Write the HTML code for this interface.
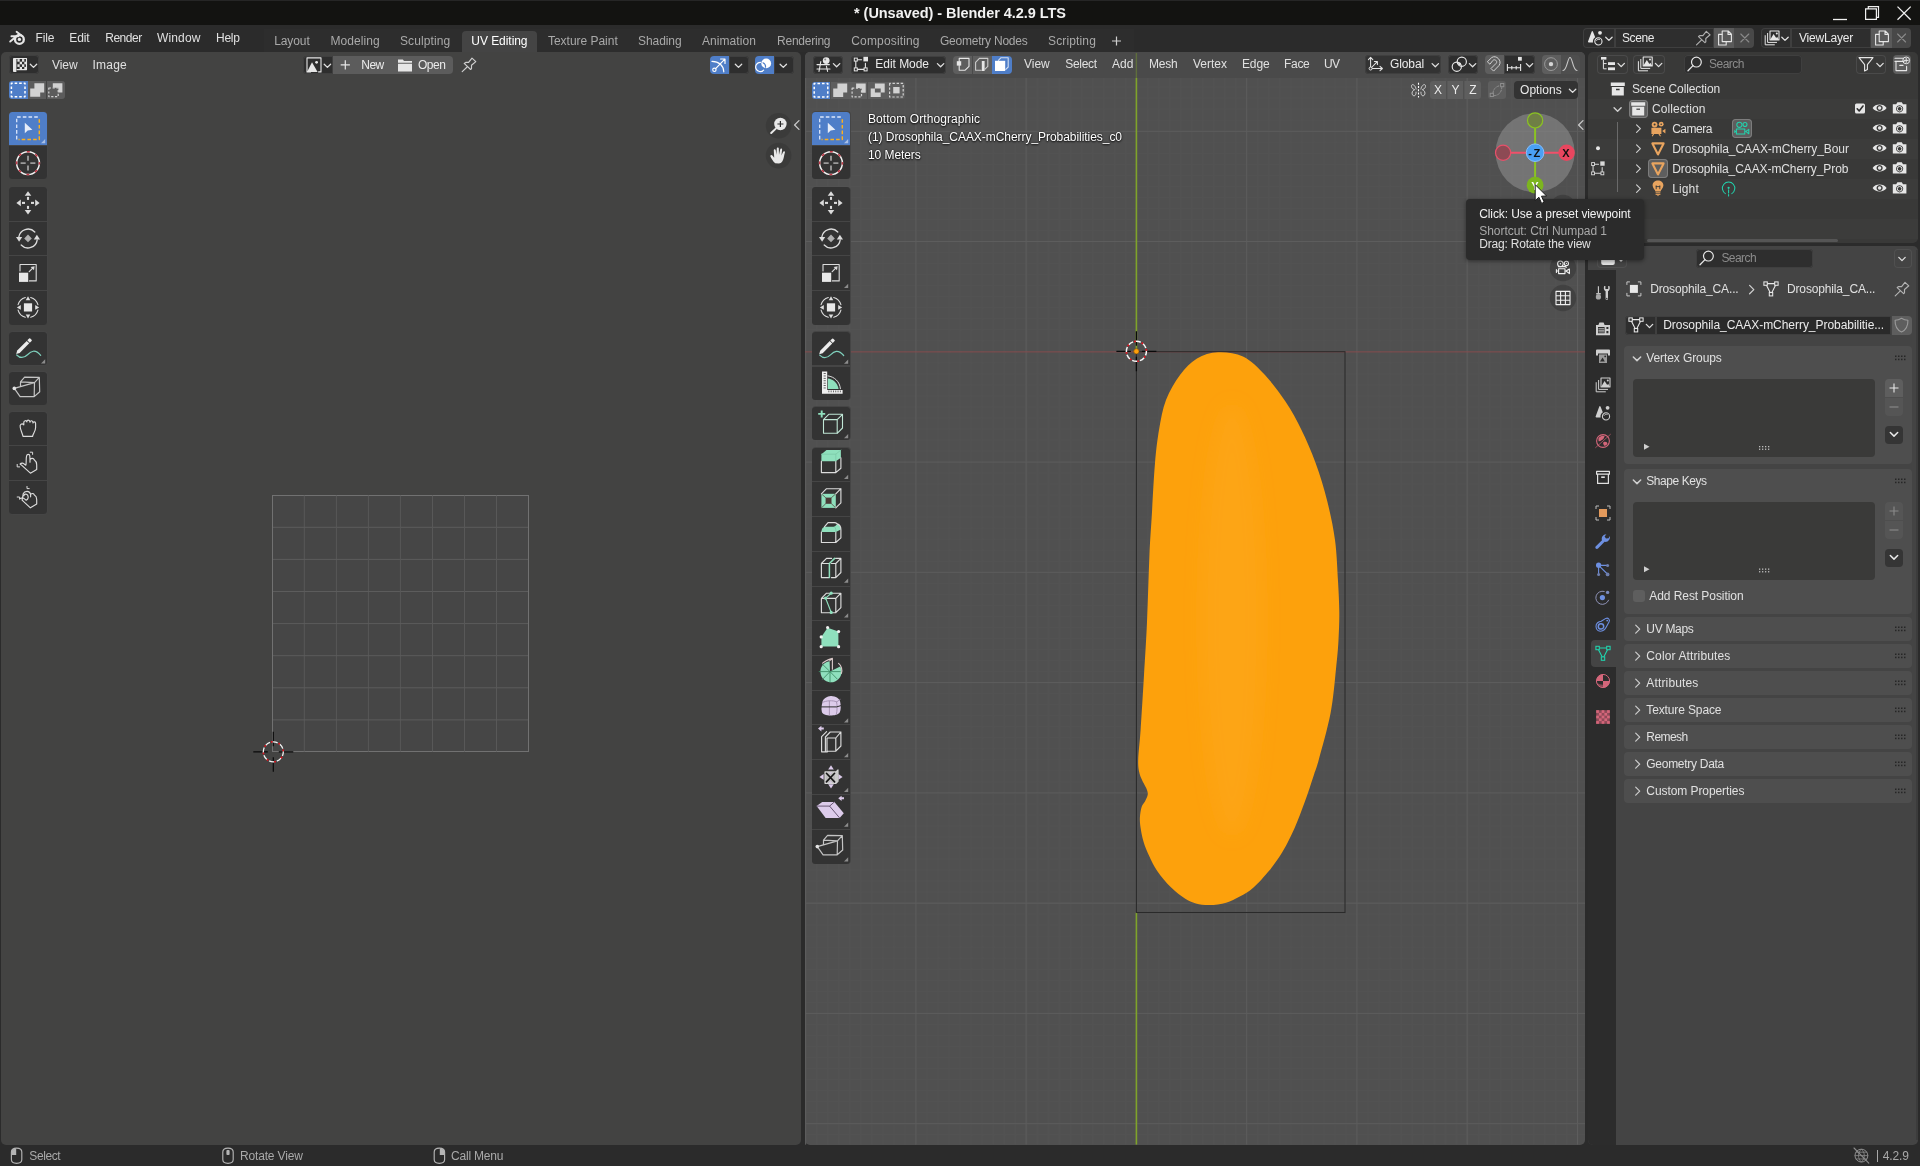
<!DOCTYPE html>
<html><head><meta charset="utf-8"><title>Blender</title>
<style>
html,body{margin:0;padding:0;background:#2b2b2b;}
body{width:1920px;height:1166px;position:relative;overflow:hidden;font-family:"Liberation Sans", sans-serif;font-size:12px;}
div,span.t{position:absolute;box-sizing:border-box;}
span.t{white-space:nowrap;line-height:20px;height:20px;}
.sh{text-shadow:0 1px 2px rgba(0,0,0,.9),0 0 2px rgba(0,0,0,.7);}
svg{position:absolute;left:0;top:0;overflow:visible;}
.L{left:0;top:0;width:1920px;height:1166px;will-change:transform;}
</style></head><body>
<div style="left:0px;top:0px;width:1920px;height:25px;background:#131311;"></div>
<div style="left:0px;top:0px;width:1920px;height:1px;background:#262626;"></div>
<div style="left:0px;top:25px;width:1920px;height:27px;background:#2b2b2b;"></div>
<div style="left:264px;top:29px;width:870px;height:23px;background:#2d2d2d;"></div>
<div style="left:462px;top:31px;width:75px;height:21px;background:#444444;border-radius:4px 4px 0 0;"></div>
<div style="left:1583px;top:28px;width:32px;height:19.5px;background:#2e2e2e;border-radius:4px 0 0 4px;box-shadow:inset 0 0 0 1px #3f3f3f;"></div>
<div style="left:1615px;top:28px;width:99px;height:19.5px;background:#2e2e2e;border-radius:0;box-shadow:inset 0 0 0 1px #3f3f3f;"></div>
<div style="left:1714px;top:28px;width:20px;height:19.5px;background:#5a5a5a;border-radius:0;"></div>
<div style="left:1734px;top:28px;width:20px;height:19.5px;background:#484848;border-radius:0 4px 4px 0;"></div>
<div style="left:1761px;top:28px;width:30px;height:19.5px;background:#2e2e2e;border-radius:4px 0 0 4px;box-shadow:inset 0 0 0 1px #3f3f3f;"></div>
<div style="left:1791px;top:28px;width:80px;height:19.5px;background:#2e2e2e;border-radius:0;box-shadow:inset 0 0 0 1px #3f3f3f;"></div>
<div style="left:1871px;top:28px;width:21px;height:19.5px;background:#5a5a5a;border-radius:0;"></div>
<div style="left:1892px;top:28px;width:19px;height:19.5px;background:#484848;border-radius:0 4px 4px 0;"></div>
<div style="left:1px;top:52px;width:800px;height:1092.7px;background:#434342;border-radius:5px;"></div>
<div style="left:805px;top:52px;width:780px;height:1092.7px;background:#505050;border-radius:5px;overflow:hidden;"></div>
<div style="left:1588px;top:52px;width:330px;height:190.5px;background:#393938;border-radius:5px;"></div>
<div style="left:1588px;top:246px;width:330px;height:898.7px;background:#444444;border-radius:5px;"></div>
<div style="left:1916px;top:250px;width:2px;height:890px;background:#3c3c3c;"></div>
<svg width="1920" height="1166" viewBox="0 0 1920 1166"><defs><clipPath id="vpclip"><rect x="805" y="78" width="780" height="1066.7" rx="0"/></clipPath></defs>
<defs><pattern id="mg" x="1135.90" y="351.30" width="11.027" height="11.027" patternUnits="userSpaceOnUse"><path d="M0.5 0 V11.027 M0 0.5 H11.027" stroke="#525252" stroke-width="1" fill="none"/></pattern></defs>
<g clip-path="url(#vpclip)"><rect x="805" y="78" width="780" height="1066.7" fill="url(#mg)"/><path d="M805.6 78 V1144.7" stroke="#5d5d5d" stroke-width="1"/><path d="M915.9 78 V1144.7" stroke="#5d5d5d" stroke-width="1"/><path d="M1026.1 78 V1144.7" stroke="#5d5d5d" stroke-width="1"/><path d="M1246.7 78 V1144.7" stroke="#5d5d5d" stroke-width="1"/><path d="M1356.9 78 V1144.7" stroke="#5d5d5d" stroke-width="1"/><path d="M1467.2 78 V1144.7" stroke="#5d5d5d" stroke-width="1"/><path d="M1577.5 78 V1144.7" stroke="#5d5d5d" stroke-width="1"/><path d="M805 131.3 H1585" stroke="#5d5d5d" stroke-width="1"/><path d="M805 241.5 H1585" stroke="#5d5d5d" stroke-width="1"/><path d="M805 462.1 H1585" stroke="#5d5d5d" stroke-width="1"/><path d="M805 572.3 H1585" stroke="#5d5d5d" stroke-width="1"/><path d="M805 682.6 H1585" stroke="#5d5d5d" stroke-width="1"/><path d="M805 792.9 H1585" stroke="#5d5d5d" stroke-width="1"/><path d="M805 903.2 H1585" stroke="#5d5d5d" stroke-width="1"/><path d="M805 1013.4 H1585" stroke="#5d5d5d" stroke-width="1"/><path d="M805 1123.7 H1585" stroke="#5d5d5d" stroke-width="1"/><path d="M805 351.9 H1585" stroke="#854c4e" stroke-width="1"/><path d="M1136.4 78 V351 M1136.4 912.6 V1144.7" stroke="#7fa32a" stroke-width="1.6"/></g>
<rect x="1136.4" y="351.7" width="208.6" height="560.8" fill="none" stroke="#2a2a2a" stroke-width="1.05"/>
<path d="M1218.0 352.3 C1225.7 352.0 1235.2 352.7 1243.0 356.5 C1250.8 360.3 1257.9 367.4 1265.0 375.0 C1272.1 382.6 1279.7 392.8 1285.8 402.0 C1291.9 411.2 1296.5 419.8 1301.5 430.0 C1306.5 440.2 1311.3 451.2 1315.6 463.0 C1319.9 474.8 1324.0 488.2 1327.2 501.0 C1330.4 513.8 1333.2 526.7 1335.0 540.0 C1336.8 553.3 1337.3 569.0 1338.0 581.0 C1338.7 593.0 1339.2 602.2 1339.3 612.0 C1339.4 621.8 1339.0 630.5 1338.5 640.0 C1338.0 649.5 1337.3 656.8 1336.0 669.0 C1334.7 681.2 1333.5 697.8 1330.6 713.0 C1327.7 728.2 1321.4 749.9 1318.7 760.0 C1316.0 770.1 1315.8 769.1 1314.3 773.7 C1312.8 778.3 1311.3 782.8 1309.8 787.4 C1308.2 792.0 1306.7 796.6 1305.0 801.2 C1303.3 805.8 1301.7 810.3 1299.9 814.9 C1298.1 819.5 1296.4 824.0 1294.4 828.6 C1292.4 833.2 1290.2 837.7 1287.8 842.3 C1285.4 846.9 1283.0 851.4 1279.9 856.1 C1276.8 860.8 1273.7 865.2 1269.3 870.5 C1264.9 875.8 1258.4 883.2 1253.5 887.6 C1248.6 892.0 1244.4 894.1 1239.8 896.6 C1235.2 899.1 1231.1 901.3 1226.1 902.7 C1221.1 904.1 1214.6 905.0 1209.6 905.1 C1204.6 905.2 1200.0 904.5 1195.9 903.4 C1191.8 902.3 1189.0 901.2 1184.9 898.6 C1180.8 896.0 1175.8 892.2 1171.2 887.6 C1166.6 883.0 1161.1 876.5 1157.4 871.2 C1153.7 866.0 1151.5 860.9 1149.2 856.1 C1146.9 851.3 1145.1 846.9 1143.7 842.3 C1142.3 837.7 1141.3 832.7 1140.7 828.6 C1140.1 824.5 1139.7 821.2 1139.9 817.6 C1140.1 814.0 1140.8 809.4 1141.7 806.7 C1142.6 804.0 1144.1 803.3 1145.1 801.2 C1146.1 799.1 1147.6 796.5 1147.8 794.3 C1148.0 792.1 1146.9 789.9 1146.2 788.1 C1145.5 786.3 1144.8 785.7 1143.7 783.3 C1142.6 780.9 1140.5 777.6 1139.6 773.7 C1138.7 769.8 1138.0 767.3 1138.2 760.0 C1138.4 752.7 1139.6 744.2 1140.6 730.0 C1141.6 715.8 1142.9 693.0 1144.0 675.0 C1145.1 657.0 1146.1 641.8 1147.0 622.0 C1147.9 602.2 1148.6 574.3 1149.4 556.0 C1150.2 537.7 1151.1 527.5 1152.0 512.0 C1152.9 496.5 1153.8 476.7 1155.0 463.0 C1156.2 449.3 1157.2 440.5 1159.0 430.0 C1160.8 419.5 1162.5 409.2 1166.0 400.0 C1169.5 390.8 1174.8 381.9 1180.0 375.0 C1185.2 368.1 1190.7 362.3 1197.0 358.5 C1203.3 354.7 1210.3 352.6 1218.0 352.3 Z" fill="#fda10c"/>
<defs><filter id="bl" x="-50%" y="-20%" width="200%" height="140%"><feGaussianBlur stdDeviation="9"/></filter></defs><ellipse cx="1232" cy="620" rx="30" ry="215" fill="#ffb43c" fill-opacity=".2" filter="url(#bl)"/>
<g transform="translate(1136.4 351.3)"><path d="M-20 0 H-5.5 M5.5 0 H20 M0 -20 V-5.5 M0 5.5 V20" stroke="#0a0a0a" stroke-width="1.3"/><circle r="10" fill="none" stroke="#f8f8f8" stroke-width="1.5" stroke-dasharray="5.2 2.65" stroke-dashoffset="1"/><circle r="10" fill="none" stroke="#e8101c" stroke-width="1.7" stroke-dasharray="1.7 6.15" stroke-dashoffset="2.7"/><circle r="2.6" fill="#fda10c" stroke="#8a5200" stroke-width=".6"/></g></svg>
<div style="left:9px;top:55px;width:30px;height:19px;background:#2e2e2e;border-radius:4px;box-shadow:inset 0 0 0 1px #3f3f3f;"></div>
<div style="left:303px;top:56px;width:30px;height:18px;background:#2e2e2e;border-radius:4px 0 0 4px;box-shadow:inset 0 0 0 1px #3f3f3f;"></div>
<div style="left:333px;top:56px;width:60.5px;height:18px;background:#5c5c5c;border-radius:0;"></div>
<div style="left:394px;top:56px;width:59px;height:18px;background:#5c5c5c;border-radius:0 4px 4px 0;"></div>
<div style="left:9px;top:81px;width:18.5px;height:18px;background:#4f7ec8;border-radius:3px 0 0 3px;"></div>
<div style="left:28px;top:81px;width:18px;height:18px;background:#5c5c5c;border-radius:0;"></div>
<div style="left:46.5px;top:81px;width:18px;height:18px;background:#5c5c5c;border-radius:0 3px 3px 0;"></div>
<div style="left:709.5px;top:56px;width:19px;height:18px;background:#4f7ec8;border-radius:4px 0 0 4px;"></div>
<div style="left:728.5px;top:56px;width:20px;height:18px;background:#2e2e2e;border-radius:0 4px 4px 0;box-shadow:inset 0 0 0 1px #3f3f3f;"></div>
<div style="left:754.5px;top:56px;width:19px;height:18px;background:#4f7ec8;border-radius:4px 0 0 4px;"></div>
<div style="left:773.5px;top:56px;width:20px;height:18px;background:#2e2e2e;border-radius:0 4px 4px 0;box-shadow:inset 0 0 0 1px #3f3f3f;"></div>
<div style="left:8.5px;top:111.0px;width:39px;height:68.4px;background:#454545;border-radius:4px;"></div>
<div style="left:9.3px;top:111.8px;width:37.4px;height:32.949999999999996px;background:#4f7ec8;border-radius:3.5px 3.5px 0 0;"></div>
<div style="left:9.3px;top:145.8px;width:37.4px;height:33.4px;background:#333333;border-radius:0 0 3.5px 3.5px;"></div>
<div style="left:8.5px;top:186.5px;width:39px;height:138.4px;background:#454545;border-radius:4px;"></div>
<div style="left:9.3px;top:187.3px;width:37.4px;height:33.449999999999996px;background:#333333;border-radius:3.5px 3.5px 0 0;"></div>
<div style="left:9.3px;top:221.8px;width:37.4px;height:33.449999999999996px;background:#333333;border-radius:0;"></div>
<div style="left:9.3px;top:256.3px;width:37.4px;height:33.449999999999996px;background:#333333;border-radius:0;"></div>
<div style="left:9.3px;top:290.8px;width:37.4px;height:33.9px;background:#333333;border-radius:0 0 3.5px 3.5px;"></div>
<div style="left:8.5px;top:331.3px;width:39px;height:34.4px;background:#454545;border-radius:4px;"></div>
<div style="left:9.3px;top:332.1px;width:37.4px;height:33.4px;background:#333333;border-radius:3.5px;"></div>
<div style="left:8.5px;top:371.3px;width:39px;height:33.8px;background:#454545;border-radius:4px;"></div>
<div style="left:9.3px;top:372.1px;width:37.4px;height:32.8px;background:#333333;border-radius:3.5px;"></div>
<div style="left:8.5px;top:410.8px;width:39px;height:103.9px;background:#454545;border-radius:4px;"></div>
<div style="left:9.3px;top:411.6px;width:37.4px;height:33.449999999999996px;background:#333333;border-radius:3.5px 3.5px 0 0;"></div>
<div style="left:9.3px;top:446.1px;width:37.4px;height:33.449999999999996px;background:#333333;border-radius:0;"></div>
<div style="left:9.3px;top:480.6px;width:37.4px;height:33.9px;background:#333333;border-radius:0 0 3.5px 3.5px;"></div>
<div style="left:811.5px;top:111.0px;width:39px;height:68.4px;background:#454545;border-radius:4px;"></div>
<div style="left:812.3px;top:111.8px;width:37.4px;height:32.949999999999996px;background:#4f7ec8;border-radius:3.5px 3.5px 0 0;"></div>
<div style="left:812.3px;top:145.8px;width:37.4px;height:33.4px;background:#333333;border-radius:0 0 3.5px 3.5px;"></div>
<div style="left:811.5px;top:186.5px;width:39px;height:138.4px;background:#454545;border-radius:4px;"></div>
<div style="left:812.3px;top:187.3px;width:37.4px;height:33.449999999999996px;background:#333333;border-radius:3.5px 3.5px 0 0;"></div>
<div style="left:812.3px;top:221.8px;width:37.4px;height:33.449999999999996px;background:#333333;border-radius:0;"></div>
<div style="left:812.3px;top:256.3px;width:37.4px;height:33.449999999999996px;background:#333333;border-radius:0;"></div>
<div style="left:812.3px;top:290.8px;width:37.4px;height:33.9px;background:#333333;border-radius:0 0 3.5px 3.5px;"></div>
<div style="left:811.5px;top:331.3px;width:39px;height:69.2px;background:#454545;border-radius:4px;"></div>
<div style="left:812.3px;top:332.1px;width:37.4px;height:33.349999999999994px;background:#333333;border-radius:3.5px 3.5px 0 0;"></div>
<div style="left:812.3px;top:366.5px;width:37.4px;height:33.8px;background:#333333;border-radius:0 0 3.5px 3.5px;"></div>
<div style="left:811.5px;top:406.3px;width:39px;height:33.8px;background:#454545;border-radius:4px;"></div>
<div style="left:812.3px;top:407.1px;width:37.4px;height:32.8px;background:#333333;border-radius:3.5px;"></div>
<div style="left:811.5px;top:446.9px;width:39px;height:417.03999999999996px;background:#454545;border-radius:4px;"></div>
<div style="left:812.3px;top:447.7px;width:37.4px;height:33.669999999999995px;background:#333333;border-radius:3.5px 3.5px 0 0;"></div>
<div style="left:812.3px;top:482.42px;width:37.4px;height:33.669999999999995px;background:#333333;border-radius:0;"></div>
<div style="left:812.3px;top:517.1399999999999px;width:37.4px;height:33.669999999999995px;background:#333333;border-radius:0;"></div>
<div style="left:812.3px;top:551.8599999999999px;width:37.4px;height:33.669999999999995px;background:#333333;border-radius:0;"></div>
<div style="left:812.3px;top:586.5799999999999px;width:37.4px;height:33.669999999999995px;background:#333333;border-radius:0;"></div>
<div style="left:812.3px;top:621.3px;width:37.4px;height:33.669999999999995px;background:#333333;border-radius:0;"></div>
<div style="left:812.3px;top:656.02px;width:37.4px;height:33.669999999999995px;background:#333333;border-radius:0;"></div>
<div style="left:812.3px;top:690.7399999999999px;width:37.4px;height:33.669999999999995px;background:#333333;border-radius:0;"></div>
<div style="left:812.3px;top:725.4599999999999px;width:37.4px;height:33.669999999999995px;background:#333333;border-radius:0;"></div>
<div style="left:812.3px;top:760.18px;width:37.4px;height:33.669999999999995px;background:#333333;border-radius:0;"></div>
<div style="left:812.3px;top:794.8999999999999px;width:37.4px;height:33.669999999999995px;background:#333333;border-radius:0;"></div>
<div style="left:812.3px;top:829.6199999999999px;width:37.4px;height:34.12px;background:#333333;border-radius:0 0 3.5px 3.5px;"></div>
<div style="left:272px;top:494.7px;width:256.8px;height:257.3px;background:#464646;box-shadow:inset 0 0 0 1px #717171;"></div>
<div style="left:805px;top:52px;width:780px;height:26px;background:#4a4a4a;border-radius:5px 5px 0 0;"></div>
<div style="left:813px;top:55.5px;width:30px;height:18px;background:#2e2e2e;border-radius:4px;box-shadow:inset 0 0 0 1px #3f3f3f;"></div>
<div style="left:851px;top:55.5px;width:95px;height:18px;background:#2e2e2e;border-radius:4px;box-shadow:inset 0 0 0 1px #3f3f3f;"></div>
<div style="left:953px;top:55.5px;width:19px;height:18px;background:#5e5e5e;border-radius:4px 0 0 4px;"></div>
<div style="left:972.5px;top:55.5px;width:19px;height:18px;background:#5e5e5e;border-radius:0;"></div>
<div style="left:992px;top:55.5px;width:19.5px;height:18px;background:#4f7ec8;border-radius:0 4px 4px 0;"></div>
<div style="left:1365px;top:55px;width:76px;height:18.5px;background:#333333;border-radius:4px;box-shadow:inset 0 0 0 1px #3f3f3f;"></div>
<div style="left:1448px;top:55px;width:30px;height:18.5px;background:#2e2e2e;border-radius:4px;box-shadow:inset 0 0 0 1px #3f3f3f;"></div>
<div style="left:1485px;top:55px;width:19px;height:18.5px;background:#5e5e5e;border-radius:4px 0 0 4px;"></div>
<div style="left:1504px;top:55px;width:31px;height:18.5px;background:#2e2e2e;border-radius:0 4px 4px 0;box-shadow:inset 0 0 0 1px #3f3f3f;"></div>
<div style="left:1542px;top:55px;width:18.5px;height:18.5px;background:#5e5e5e;border-radius:4px 0 0 4px;"></div>
<div style="left:1560.5px;top:55px;width:19.5px;height:18.5px;background:#4e4e4e;border-radius:0 4px 4px 0;"></div>
<div style="left:812px;top:81.5px;width:18px;height:17.5px;background:#4f7ec8;border-radius:3px 0 0 3px;"></div>
<div style="left:830.6px;top:81.5px;width:18.2px;height:17.5px;background:#5e5e5e;border-radius:0;"></div>
<div style="left:849.2px;top:81.5px;width:18.2px;height:17.5px;background:#5e5e5e;border-radius:0;"></div>
<div style="left:867.8px;top:81.5px;width:18.2px;height:17.5px;background:#5e5e5e;border-radius:0;"></div>
<div style="left:886.4px;top:81.5px;width:18.2px;height:17.5px;background:#5e5e5e;border-radius:0 3px 3px 0;"></div>
<div style="left:1430px;top:81px;width:16.6px;height:18px;background:#5e5e5e;border-radius:3px 0 0 3px;"></div>
<div style="left:1447px;top:81px;width:16.6px;height:18px;background:#5e5e5e;border-radius:0;"></div>
<div style="left:1464px;top:81px;width:17px;height:18px;background:#5e5e5e;border-radius:0 3px 3px 0;"></div>
<div style="left:1488px;top:81px;width:18px;height:18px;background:#5e5e5e;border-radius:3px;"></div>
<div style="left:1513.5px;top:81px;width:64.5px;height:18px;background:#333333;border-radius:4px;"></div>
<div style="left:1597px;top:55px;width:30.5px;height:18.5px;background:#393938;border-radius:4px;box-shadow:inset 0 0 0 1px #4a4a4a;"></div>
<div style="left:1633px;top:55px;width:32px;height:18.5px;background:#393938;border-radius:4px;box-shadow:inset 0 0 0 1px #4a4a4a;"></div>
<div style="left:1684px;top:55px;width:118px;height:18.5px;background:#2e2e2e;border-radius:4px;box-shadow:inset 0 0 0 1px #3f3f3f;"></div>
<div style="left:1856px;top:55px;width:30px;height:18.5px;background:#393938;border-radius:4px;box-shadow:inset 0 0 0 1px #4a4a4a;"></div>
<div style="left:1892.5px;top:55px;width:18.5px;height:18.5px;background:#5e5e5e;border-radius:4px;"></div>
<div style="left:1588px;top:99px;width:330px;height:20px;background:#3c3c3b;"></div>
<div style="left:1588px;top:139px;width:330px;height:20px;background:#3c3c3b;"></div>
<div style="left:1588px;top:179px;width:330px;height:20px;background:#3c3c3b;"></div>
<div style="left:1588px;top:219px;width:330px;height:20px;background:#3c3c3b;"></div>
<div style="left:1647px;top:238.5px;width:191px;height:3.5px;background:#555555;border-radius:2px;"></div>
<div style="left:1696px;top:249px;width:117px;height:18.5px;background:#2e2e2e;border-radius:4px;box-shadow:inset 0 0 0 1px #3f3f3f;"></div>
<div style="left:1893.5px;top:249px;width:18px;height:18.5px;background:#444444;border-radius:4px;box-shadow:inset 0 0 0 1px #505050;"></div>
<div style="left:1588px;top:270px;width:28px;height:874.7px;background:#2c2c2c;border-radius:0 0 0 5px;"></div>
<div style="left:1590.5px;top:639.5px;width:25.5px;height:27px;background:#444444;border-radius:4px 0 0 4px;"></div>
<div style="left:1625px;top:316px;width:30.5px;height:18.5px;background:#2e2e2e;border-radius:4px 0 0 4px;box-shadow:inset 0 0 0 1px #3f3f3f;"></div>
<div style="left:1656px;top:316px;width:235px;height:18.5px;background:#2a2a2a;border-radius:0;box-shadow:inset 0 0 0 1px #3f3f3f;"></div>
<div style="left:1891.5px;top:316px;width:20px;height:18.5px;background:#5e5e5e;border-radius:0 4px 4px 0;"></div>
<div style="left:1624px;top:345.5px;width:288px;height:118px;background:#4e4e4e;border-radius:4px;"></div>
<div style="left:1624px;top:468.5px;width:288px;height:145px;background:#4e4e4e;border-radius:4px;"></div>
<div style="left:1624px;top:616.5px;width:288px;height:24.5px;background:#4e4e4e;border-radius:4px;"></div>
<div style="left:1624px;top:643.5px;width:288px;height:24.5px;background:#4e4e4e;border-radius:4px;"></div>
<div style="left:1624px;top:670.5px;width:288px;height:24.5px;background:#4e4e4e;border-radius:4px;"></div>
<div style="left:1624px;top:697.5px;width:288px;height:24.5px;background:#4e4e4e;border-radius:4px;"></div>
<div style="left:1624px;top:724.5px;width:288px;height:24.5px;background:#4e4e4e;border-radius:4px;"></div>
<div style="left:1624px;top:751.5px;width:288px;height:24.5px;background:#4e4e4e;border-radius:4px;"></div>
<div style="left:1624px;top:778.5px;width:288px;height:24.5px;background:#4e4e4e;border-radius:4px;"></div>
<div style="left:1633px;top:379px;width:242px;height:78px;background:#3a3a39;border-radius:4px;"></div>
<div style="left:1885px;top:379px;width:18px;height:18px;background:#5e5e5e;border-radius:4px 4px 0 0;"></div>
<div style="left:1885px;top:398px;width:18px;height:18px;background:#555555;border-radius:0 0 4px 4px;"></div>
<div style="left:1885px;top:425.5px;width:18px;height:18px;background:#353535;border-radius:4px;"></div>
<div style="left:1633px;top:502px;width:242px;height:77.5px;background:#3a3a39;border-radius:4px;"></div>
<div style="left:1885px;top:502px;width:18px;height:18px;background:#555555;border-radius:4px 4px 0 0;"></div>
<div style="left:1885px;top:521px;width:18px;height:18px;background:#555555;border-radius:0 0 4px 4px;"></div>
<div style="left:1885px;top:548.5px;width:18px;height:18px;background:#353535;border-radius:4px;"></div>
<div style="left:1633px;top:590px;width:12px;height:12px;background:#5e5e5e;border-radius:3px;"></div>
<div style="left:1628.6px;top:99.6px;width:19px;height:18.6px;background:#5e5e5e;border-radius:4px;box-shadow:inset 0 0 0 1px #7d7d7d;"></div>
<div style="left:1648.4px;top:159.4px;width:19.4px;height:18.6px;background:#5e5e5e;border-radius:4px;box-shadow:inset 0 0 0 1px #7d7d7d;"></div>
<div style="left:1732px;top:118.8px;width:20px;height:18.8px;background:#5e5e5e;border-radius:4px;box-shadow:inset 0 0 0 1px #7d7d7d;"></div>
<div style="left:1597px;top:249px;width:30px;height:18.5px;background:#444444;border-radius:4px;box-shadow:inset 0 0 0 1px #505050;"></div>
<svg width="1920" height="1166" viewBox="0 0 1920 1166">
<path d="M1833 19.5 H1847" stroke="#f0f0f0" stroke-width="1.3" fill="none"/>
<path d="M1865.6 8.9 h10.8 v10.4 h-10.8 z M1868.3 8.9 v-2.2 h10.2 v10.6 h-2.1" stroke="#f0f0f0" stroke-width="1.2" fill="none"/>
<path d="M1897.5 6.6 L1910.7 19.8 M1910.7 6.6 L1897.5 19.8" stroke="#f0f0f0" stroke-width="1.3" fill="none"/>
<path d="M1116.5 36.5 v9 M1112 41 h9" stroke="#cfcfcf" stroke-width="1.2" fill="none"/>
<path d="M1877.5 1150 v12" stroke="#a9a9a9" stroke-width="1"/>
<g transform="translate(28 128.2)" ><path d="M-11.3 11.2 V-11.2 H11.3" fill="none" stroke="#dbe6fb" stroke-width="1.3" stroke-linejoin="round"  stroke-dasharray="3.6 2.1" stroke-linecap="butt"/><path d="M11.3 -9 V11.2 H-9.5" fill="none" stroke="#fbb01e" stroke-width="1.45" stroke-linejoin="round"  stroke-dasharray="3.6 2.1" stroke-linecap="butt"/><path d="M-3.2 -5.4 L-3.2 5 L-0.3 2.4 L4.4 1.6 Z" fill="#e6ecf8" /><path d="M17.2 15 L17.2 10.8 L13 15 Z" fill="#a9bfe6" /></g>
<g transform="translate(28 163.1)" ><circle r="11.4" fill="none" stroke="#f2f2f2" stroke-width="1.5"/><circle r="11.4" fill="none" stroke="#c23a48" stroke-width="1.5" stroke-dasharray="3 5.95" stroke-dashoffset="1.5"/><path d="M-7.4 0 H-2.3 M2.3 0 H7.4 M0 -7.4 V-2.3 M0 2.3 V7.4" fill="none" stroke="#9a9a9a" stroke-width="1.9" stroke-linejoin="round"  stroke-linecap="butt"/></g>
<g transform="translate(28 202.9)" ><g transform="rotate(0)"><path d="M0 -11.6 L3.3 -7.2 L-3.3 -7.2 Z" fill="#dcdcdc" /><path d="M0 -6 V-3" fill="none" stroke="#dcdcdc" stroke-width="2.1" stroke-linejoin="round"  stroke-linecap="butt"/></g><g transform="rotate(90)"><path d="M0 -11.6 L3.3 -7.2 L-3.3 -7.2 Z" fill="#dcdcdc" /><path d="M0 -6 V-3" fill="none" stroke="#dcdcdc" stroke-width="2.1" stroke-linejoin="round"  stroke-linecap="butt"/></g><g transform="rotate(180)"><path d="M0 -11.6 L3.3 -7.2 L-3.3 -7.2 Z" fill="#dcdcdc" /><path d="M0 -6 V-3" fill="none" stroke="#dcdcdc" stroke-width="2.1" stroke-linejoin="round"  stroke-linecap="butt"/></g><g transform="rotate(270)"><path d="M0 -11.6 L3.3 -7.2 L-3.3 -7.2 Z" fill="#dcdcdc" /><path d="M0 -6 V-3" fill="none" stroke="#dcdcdc" stroke-width="2.1" stroke-linejoin="round"  stroke-linecap="butt"/></g></g>
<g transform="translate(28 238.4)" ><path d="M-9.2 -1.2 A9.3 9.3 0 0 1 6.8 -6.4" fill="none" stroke="#dcdcdc" stroke-width="1.3" stroke-linejoin="round" stroke-linecap="round" /><path d="M9.2 1.4 A9.3 9.3 0 0 1 -6.8 6.6" fill="none" stroke="#dcdcdc" stroke-width="1.3" stroke-linejoin="round" stroke-linecap="round" /><path d="M-12 -1.4 L-5.8 -1.4 L-8.9 3.4 Z" fill="#dcdcdc" /><path d="M12 1.2 L5.8 1.2 L8.9 -3.7 Z" fill="#dcdcdc" /><path d="M0 -3.8 L3.8 0 L0 3.8 L-3.8 0 Z" fill="#b0b0b0" /></g>
<g transform="translate(28 272.9)" ><path d="M-8 -2 V-8.4 H8.2 V8 H1.4" fill="none" stroke="#dcdcdc" stroke-width="1.1" stroke-linejoin="round" stroke-linecap="round" /><path d="M-9 -0.2 H0.2 V9 H-9 Z" fill="#e8e8e8" /><path d="M1.2 -1.2 L5.2 -5.2" fill="none" stroke="#dcdcdc" stroke-width="1.2" stroke-linejoin="round" stroke-linecap="round" /><path d="M6.6 -6.6 L6 -2.6 L2.6 -6 Z" fill="#dcdcdc" /></g>
<g transform="translate(28 307.4)" ><path d="M-4.1 -4.1 H4.1 V4.1 H-4.1 Z" fill="#e8e8e8" /><g transform="rotate(0)"><path d="M2.7 -9.9 A10.3 10.3 0 0 1 9.9 -2.7" fill="none" stroke="#dcdcdc" stroke-width="1.1" stroke-linejoin="round" stroke-linecap="round" /><path d="M0 -11.2 L2.3 -7.2 L-2.3 -7.2 Z" fill="#dcdcdc" /></g><g transform="rotate(90)"><path d="M2.7 -9.9 A10.3 10.3 0 0 1 9.9 -2.7" fill="none" stroke="#dcdcdc" stroke-width="1.1" stroke-linejoin="round" stroke-linecap="round" /><path d="M0 -11.2 L2.3 -7.2 L-2.3 -7.2 Z" fill="#dcdcdc" /></g><g transform="rotate(180)"><path d="M2.7 -9.9 A10.3 10.3 0 0 1 9.9 -2.7" fill="none" stroke="#dcdcdc" stroke-width="1.1" stroke-linejoin="round" stroke-linecap="round" /><path d="M0 -11.2 L2.3 -7.2 L-2.3 -7.2 Z" fill="#dcdcdc" /></g><g transform="rotate(270)"><path d="M2.7 -9.9 A10.3 10.3 0 0 1 9.9 -2.7" fill="none" stroke="#dcdcdc" stroke-width="1.1" stroke-linejoin="round" stroke-linecap="round" /><path d="M0 -11.2 L2.3 -7.2 L-2.3 -7.2 Z" fill="#dcdcdc" /></g></g>
<g transform="translate(28 348.5)" ><path d="M-11.3 6.5 C-8 9.8 -4.5 10 -0.5 6.2 C3 2.8 7 0.2 12.7 6.8" fill="none" stroke="#7fd1bd" stroke-width="1.2" stroke-linejoin="round" stroke-linecap="round" /><g transform="translate(-11.8 5.6) rotate(-45.5)"><path d="M0 0 L3.2 -1.75 L16.8 -1.75 L16.8 1.75 L3.2 1.75 Z" fill="#ececec" /><path d="M17.6 -1.75 H20.2 Q21 -1.75 21 -0.9 V0.9 Q21 1.75 20.2 1.75 H17.6 Z" fill="#ececec" /></g><path d="M17.2 15 L17.2 10.8 L13 15 Z" fill="#8c8c8c" /></g>
<g transform="translate(28 388.2)" ><path d="M-7.5 -6.3 L-3.4 -11.1 L11.3 -10.8 L6.5 -5.6 Z M11.3 -10.8 L11.7 3.6 L6.2 8.4 L6.5 -5.6 M6.2 8.4 H-7.9 L-13.7 0.2 L6.5 -5.6 M-7.5 -6.3 V-2" fill="none" stroke="#c4c4c4" stroke-width="1.2" stroke-linejoin="round" stroke-linecap="round" /><circle cx="-13.7" cy="0.2" r="1.8" fill="#e4e4e4"/></g>
<g transform="translate(28 428.2)" ><path d="M-5 8.2 H4.6 C5 5 7.6 3.4 7.6 -0.6 V-4.8 C7.6 -6.8 5.2 -6.8 5 -5.2 C5 -8 2.2 -8 2 -6 C1.8 -8.8 -1.2 -8.6 -1.2 -6.2 C-1.6 -8.2 -4.2 -7.8 -4.2 -5.6 V-3.4 C-6.2 -5.4 -8.4 -3.6 -7.8 -1.2 C-7.4 2.4 -5.6 5.2 -5 8.2 Z" fill="none" stroke="#dcdcdc" stroke-width="1.15" stroke-linejoin="round" stroke-linecap="round" /></g>
<g transform="translate(28 462.8)" ><path d="M-7.9 1.2 C-6.5 -0.2 -4.5 0.2 -3.5 1.5 L-2.2 2.4 C-1.4 0 -2.2 -4 -1.4 -7 C-1 -8.8 1.6 -8.8 1.8 -7 L2 -3.2 C3.5 -5 5.6 -4.6 6.2 -3 C7.6 -2 8.7 0 8.7 2 V6.6 L2.4 10.4 L-5.9 2.8 Z M2 -3.2 V-0.6" fill="none" stroke="#dcdcdc" stroke-width="1.15" stroke-linejoin="round" stroke-linecap="round" /><path d="M2.2 -10.6 H4.6 V-8.4 M-10.8 1.6 V4.1 H-8.4" fill="none" stroke="#dcdcdc" stroke-width="1" stroke-linejoin="round" stroke-linecap="round" /></g>
<g transform="translate(28 497.2)" ><path d="M-7.9 1.4 C-6.5 0.2 -4.5 0.4 -3.5 1.7 L-1.8 3 C-0.2 2 0.6 0 -0.2 -1.8 C-1.2 -3.6 -3.6 -3.4 -4.2 -1.4 M-4.8 -3.4 C-3.4 -6.6 1.8 -6.8 2.6 -2.8 C4.4 -4.4 6 -3.6 6.4 -2.2 C7.8 -1.4 8.7 0.4 8.7 2.2 V6.8 L2.4 10.6 L-5.9 3 Z M2.6 -2.8 V-0.4" fill="none" stroke="#dcdcdc" stroke-width="1.15" stroke-linejoin="round" stroke-linecap="round" /><path d="M-1 -10.8 V-8.6 H1.2 M-10.8 -0.2 H-8.4 V2" fill="none" stroke="#dcdcdc" stroke-width="1" stroke-linejoin="round" stroke-linecap="round" /></g>
<g transform="translate(831 128.2)" ><path d="M-11.3 11.2 V-11.2 H11.3" fill="none" stroke="#dbe6fb" stroke-width="1.3" stroke-linejoin="round"  stroke-dasharray="3.6 2.1" stroke-linecap="butt"/><path d="M11.3 -9 V11.2 H-9.5" fill="none" stroke="#fbb01e" stroke-width="1.45" stroke-linejoin="round"  stroke-dasharray="3.6 2.1" stroke-linecap="butt"/><path d="M-3.2 -5.4 L-3.2 5 L-0.3 2.4 L4.4 1.6 Z" fill="#e6ecf8" /><path d="M17.2 15 L17.2 10.8 L13 15 Z" fill="#a9bfe6" /></g>
<g transform="translate(831 163.1)" ><circle r="11.4" fill="none" stroke="#f2f2f2" stroke-width="1.5"/><circle r="11.4" fill="none" stroke="#c23a48" stroke-width="1.5" stroke-dasharray="3 5.95" stroke-dashoffset="1.5"/><path d="M-7.4 0 H-2.3 M2.3 0 H7.4 M0 -7.4 V-2.3 M0 2.3 V7.4" fill="none" stroke="#9a9a9a" stroke-width="1.9" stroke-linejoin="round"  stroke-linecap="butt"/></g>
<g transform="translate(831 202.9)" ><g transform="rotate(0)"><path d="M0 -11.6 L3.3 -7.2 L-3.3 -7.2 Z" fill="#dcdcdc" /><path d="M0 -6 V-3" fill="none" stroke="#dcdcdc" stroke-width="2.1" stroke-linejoin="round"  stroke-linecap="butt"/></g><g transform="rotate(90)"><path d="M0 -11.6 L3.3 -7.2 L-3.3 -7.2 Z" fill="#dcdcdc" /><path d="M0 -6 V-3" fill="none" stroke="#dcdcdc" stroke-width="2.1" stroke-linejoin="round"  stroke-linecap="butt"/></g><g transform="rotate(180)"><path d="M0 -11.6 L3.3 -7.2 L-3.3 -7.2 Z" fill="#dcdcdc" /><path d="M0 -6 V-3" fill="none" stroke="#dcdcdc" stroke-width="2.1" stroke-linejoin="round"  stroke-linecap="butt"/></g><g transform="rotate(270)"><path d="M0 -11.6 L3.3 -7.2 L-3.3 -7.2 Z" fill="#dcdcdc" /><path d="M0 -6 V-3" fill="none" stroke="#dcdcdc" stroke-width="2.1" stroke-linejoin="round"  stroke-linecap="butt"/></g></g>
<g transform="translate(831 238.4)" ><path d="M-9.2 -1.2 A9.3 9.3 0 0 1 6.8 -6.4" fill="none" stroke="#dcdcdc" stroke-width="1.3" stroke-linejoin="round" stroke-linecap="round" /><path d="M9.2 1.4 A9.3 9.3 0 0 1 -6.8 6.6" fill="none" stroke="#dcdcdc" stroke-width="1.3" stroke-linejoin="round" stroke-linecap="round" /><path d="M-12 -1.4 L-5.8 -1.4 L-8.9 3.4 Z" fill="#dcdcdc" /><path d="M12 1.2 L5.8 1.2 L8.9 -3.7 Z" fill="#dcdcdc" /><path d="M0 -3.8 L3.8 0 L0 3.8 L-3.8 0 Z" fill="#b0b0b0" /></g>
<g transform="translate(831 272.9)" ><path d="M-8 -2 V-8.4 H8.2 V8 H1.4" fill="none" stroke="#dcdcdc" stroke-width="1.1" stroke-linejoin="round" stroke-linecap="round" /><path d="M-9 -0.2 H0.2 V9 H-9 Z" fill="#e8e8e8" /><path d="M1.2 -1.2 L5.2 -5.2" fill="none" stroke="#dcdcdc" stroke-width="1.2" stroke-linejoin="round" stroke-linecap="round" /><path d="M6.6 -6.6 L6 -2.6 L2.6 -6 Z" fill="#dcdcdc" /><path d="M17.2 15 L17.2 10.8 L13 15 Z" fill="#8c8c8c" /></g>
<g transform="translate(831 307.4)" ><path d="M-4.1 -4.1 H4.1 V4.1 H-4.1 Z" fill="#e8e8e8" /><g transform="rotate(0)"><path d="M2.7 -9.9 A10.3 10.3 0 0 1 9.9 -2.7" fill="none" stroke="#dcdcdc" stroke-width="1.1" stroke-linejoin="round" stroke-linecap="round" /><path d="M0 -11.2 L2.3 -7.2 L-2.3 -7.2 Z" fill="#dcdcdc" /></g><g transform="rotate(90)"><path d="M2.7 -9.9 A10.3 10.3 0 0 1 9.9 -2.7" fill="none" stroke="#dcdcdc" stroke-width="1.1" stroke-linejoin="round" stroke-linecap="round" /><path d="M0 -11.2 L2.3 -7.2 L-2.3 -7.2 Z" fill="#dcdcdc" /></g><g transform="rotate(180)"><path d="M2.7 -9.9 A10.3 10.3 0 0 1 9.9 -2.7" fill="none" stroke="#dcdcdc" stroke-width="1.1" stroke-linejoin="round" stroke-linecap="round" /><path d="M0 -11.2 L2.3 -7.2 L-2.3 -7.2 Z" fill="#dcdcdc" /></g><g transform="rotate(270)"><path d="M2.7 -9.9 A10.3 10.3 0 0 1 9.9 -2.7" fill="none" stroke="#dcdcdc" stroke-width="1.1" stroke-linejoin="round" stroke-linecap="round" /><path d="M0 -11.2 L2.3 -7.2 L-2.3 -7.2 Z" fill="#dcdcdc" /></g></g>
<g transform="translate(831 348.7)" ><path d="M-11.3 6.5 C-8 9.8 -4.5 10 -0.5 6.2 C3 2.8 7 0.2 12.7 6.8" fill="none" stroke="#7fd1bd" stroke-width="1.2" stroke-linejoin="round" stroke-linecap="round" /><g transform="translate(-11.8 5.6) rotate(-45.5)"><path d="M0 0 L3.2 -1.75 L16.8 -1.75 L16.8 1.75 L3.2 1.75 Z" fill="#ececec" /><path d="M17.6 -1.75 H20.2 Q21 -1.75 21 -0.9 V0.9 Q21 1.75 20.2 1.75 H17.6 Z" fill="#ececec" /></g><path d="M17.2 15 L17.2 10.8 L13 15 Z" fill="#8c8c8c" /></g>
<g transform="translate(831 383.1)" ><path d="M-3.2 5.9 V-4.6 C1.6 -4.2 6.6 -0.4 7.6 5.9 Z" fill="#8fe0bd" /><path d="M-3 -7.2 C3.4 -6.4 8.8 -1.6 9.4 5.6" fill="none" stroke="#dcdcdc" stroke-width="1" stroke-linejoin="round" stroke-linecap="round" /><path d="M-9 -11.6 H-3.8 V7 H11.6 V10.6 H-9 Z" fill="#efefef" /><rect x="-7.4" y="-10.0" width="2.2" height="0.9" fill="#5a5a5a"/><rect x="-7.4" y="-7.6" width="2.2" height="0.9" fill="#5a5a5a"/><rect x="-7.4" y="-5.2" width="2.2" height="0.9" fill="#5a5a5a"/><rect x="-7.4" y="-2.8" width="2.2" height="0.9" fill="#5a5a5a"/><rect x="-7.4" y="-0.4" width="2.2" height="0.9" fill="#5a5a5a"/><rect x="-7.4" y="2.0" width="2.2" height="0.9" fill="#5a5a5a"/><rect x="-7.4" y="4.4" width="2.2" height="0.9" fill="#5a5a5a"/><rect x="-2.6" y="7.4" width="0.9" height="1.8" fill="#5a5a5a"/><rect x="-0.3" y="7.4" width="0.9" height="1.8" fill="#5a5a5a"/><rect x="2.0" y="7.4" width="0.9" height="1.8" fill="#5a5a5a"/><rect x="4.3" y="7.4" width="0.9" height="1.8" fill="#5a5a5a"/><rect x="6.6" y="7.4" width="0.9" height="1.8" fill="#5a5a5a"/><rect x="8.9" y="7.4" width="0.9" height="1.8" fill="#5a5a5a"/></g>
<g transform="translate(831 423.2)" ><path d="M-9.3 -12.8 V-5.8 M-12.8 -9.3 H-5.8" fill="none" stroke="#8fe0bd" stroke-width="1.9" stroke-linejoin="round"  stroke-linecap="butt"/><path d="M-7.5 -3.6 H6.199999999999999 V10.1 H-7.5 Z M-7.5 -3.6 L-2.2 -8.9 H11.5 L6.199999999999999 -3.6 M11.5 -8.9 V4.8 L6.199999999999999 10.1" fill="none" stroke="#bfe6d5" stroke-width="1.1" stroke-linejoin="round" stroke-linecap="round" /><path d="M17.2 15 L17.2 10.8 L13 15 Z" fill="#8c8c8c" /></g>
<g transform="translate(831 463.9)" ><path d="M -9.6 -2.7 V -9.7 L -4.5 -13.8 H 9.9 V -6.1 L 4.8 -2.7 Z" fill="#8fe0bd" /><path d="M -9.6 -2.7 V 8.7 H 4.8 V -2.7 M 4.8 8.7 L 9.9 4.3 V -6.1" fill="none" stroke="#dcdcdc" stroke-width="1.15" stroke-linejoin="round" stroke-linecap="round" /><path d="M -9.6 -9.7 H 4.8 L 9.9 -13.8 M 4.8 -9.7 V -2.7" fill="none" stroke="#7cc9a8" stroke-width="0.8" stroke-linejoin="round" stroke-linecap="round" /><path d="M17.2 15 L17.2 10.8 L13 15 Z" fill="#8c8c8c" /></g>
<g transform="translate(831 498.0)" ><path d="M-9.6 -4.2 H4.8 V9.9 H-9.6 Z" fill="#8fe0bd" /><path d="M-5.4 -0.4 H0.5 V5.8 H-5.4 Z" fill="#4a3a36" /><path d="M-9.6 -4.2 L-5.4 -0.4 M4.8 -4.2 L0.5 -0.4 M-9.6 9.9 L-5.4 5.8 M4.8 9.9 L0.5 5.8" fill="none" stroke="#5a4a44" stroke-width="0.8" stroke-linejoin="round" stroke-linecap="round" /><path d="M-9.6 -4.2 L-4.5 -9.3 H9.9 V4.8 L4.8 9.9 M4.8 -4.2 L9.9 -9.3" fill="none" stroke="#dcdcdc" stroke-width="1.15" stroke-linejoin="round" stroke-linecap="round" /></g>
<g transform="translate(831 533.3)" ><path d="M-9.6 -1.2 C-9.6 -4.4 -8 -6.6 -6.2 -6.6 H3.6 L6.2 -9.4 C8.4 -8.8 9.9 -6.6 9.9 -3.8 L4.8 -1.2 Z" fill="#8fe0bd" /><path d="M-9.6 -1.2 V9.2 H4.8 V-1.2 M4.8 9.2 L9.9 4.6 V-3.8 C9.9 -6.8 8.2 -8.8 6.2 -9.4 C5.2 -10.4 4.6 -10.6 3.4 -10.6 H-3 L-6.6 -6.4" fill="none" stroke="#dcdcdc" stroke-width="1.15" stroke-linejoin="round" stroke-linecap="round" /><path d="M3.6 -6.6 C5 -5 5 -3 4.8 -1.2" fill="none" stroke="#7cc9a8" stroke-width="0.9" stroke-linejoin="round" stroke-linecap="round" /></g>
<g transform="translate(831 567.7)" ><path d="M-2 9.9 H-9.6 V-4.2 H-2.2 M-9.6 -4.2 L-4.5 -9.3 H0.6 M0.4 -4.2 H4.8 V9.9 H0.4 M4.8 9.9 L9.9 4.8 V-9.3 H4.6 M4.8 -4.2 L9.9 -9.3" fill="none" stroke="#dcdcdc" stroke-width="1.15" stroke-linejoin="round" stroke-linecap="round" /><path d="M-1.6 9.9 V-4.2 L3.6 -9.3" fill="none" stroke="#8fe0bd" stroke-width="1.5" stroke-linejoin="round" stroke-linecap="round" /><path d="M17.2 15 L17.2 10.8 L13 15 Z" fill="#8c8c8c" /></g>
<g transform="translate(831 602.5)" ><path d="M-9.6 -4.2 H4.800000000000001 V10.2 H-9.6 Z M-9.6 -4.2 L-4.5 -9.3 H9.9 L4.800000000000001 -4.2 M9.9 -9.3 V5.1 L4.800000000000001 10.2" fill="none" stroke="#dcdcdc" stroke-width="1.15" stroke-linejoin="round" stroke-linecap="round" /><path d="M0.2 -9.3 L-5.4 -4.4 L0.2 9.9" fill="none" stroke="#8fe0bd" stroke-width="1.2" stroke-linejoin="round" stroke-linecap="round" /><circle cx="0.2" cy="-9.3" r="1.6" fill="#8fe0bd"/><circle cx="-5.4" cy="-4.4" r="1.6" fill="#8fe0bd"/><circle cx="0.2" cy="9.9" r="1.6" fill="#8fe0bd"/><path d="M17.2 15 L17.2 10.8 L13 15 Z" fill="#8c8c8c" /></g>
<g transform="translate(831 638.1)" ><path d="M-3.4 -10.4 L7.4 -6.6 V8.4 H-9.6 V-1.4 Z" fill="#8fe0bd" /><circle cx="-3.4" cy="-10.6" r="1.6" fill="#f0f0f0"/><circle cx="7.6" cy="-6.6" r="1.6" fill="#f0f0f0"/><circle cx="-9.8" cy="-1.2" r="1.6" fill="#f0f0f0"/><circle cx="-9.8" cy="8.6" r="1.6" fill="#f0f0f0"/><circle cx="7.6" cy="8.6" r="1.6" fill="#f0f0f0"/></g>
<g transform="translate(831 672.8)" ><path d="M-1 -1.2 L-1.4 -11.6 A10.6 10.6 0 1 0 9.2 -6.4 Z" fill="#8fe0bd" transform="translate(0 0)"/><path d="M-1 -1.2 L-8.6 -8.6 M-1 -1.2 H-11.8 M-1 -1.2 L-8.6 6.6 M-1 -1.2 V9.6 M-1 -1.2 L6.2 6.2 M-1 -1.2 H9.2" fill="none" stroke="#3f8f68" stroke-width="0.9" stroke-linejoin="round" stroke-linecap="round" /><path d="M-8.4 -9.6 C-5.4 -12.4 -1 -13.6 1.4 -14.4 V-3.6 M1.4 -14.4 L-1.2 -12.2 M7.6 -9.4 C10.4 -7.4 11.6 -2.6 10.4 0.6" fill="none" stroke="#d8c8c8" stroke-width="1.15" stroke-linejoin="round" stroke-linecap="round" /></g>
<g transform="translate(831 707.5)" ><path d="M-8.6 -5 C-8.6 -8.4 -3.4 -11.6 0.2 -11.4 C4.4 -11.4 9.2 -8.6 9.2 -5.4 C10 -2 10 2.6 8.8 4.8 C7.4 7.4 3 8 -0.4 8 C-4.6 8 -9 6.6 -9.2 4 C-9.8 1.4 -9.4 -2.4 -8.6 -5 Z" fill="#dccbea" /><path d="M-8.6 -5 C-5 -7 2 -7.4 5.6 -5.6 L9.2 -8 M-1.6 -6.4 V7.8 M5.6 -5.6 C6.4 -2 6.2 3 5.4 6.6" fill="none" stroke="#9a88a8" stroke-width="0.8" stroke-linejoin="round" stroke-linecap="round" /><path d="M-9.6 -0.6 H5.6 L9.6 -1.8" fill="none" stroke="#2e2e2e" stroke-width="1" stroke-linejoin="round" stroke-linecap="round" /><path d="M17.2 15 L17.2 10.8 L13 15 Z" fill="#8c8c8c" /></g>
<g transform="translate(831 742.2)" ><path d="M-3.6 9.6 H-9.4 V-5.6 L-4.4 -10.6 M-5.6 9.4 V-5.2 L-0.8 -10.2 H9.9 V3.8 L4.8 9 H-4 V-4.2 H4.8 V9 M4.8 -4.2 L9.9 -10.2" fill="none" stroke="#dcdcdc" stroke-width="1.15" stroke-linejoin="round" stroke-linecap="round" /><path d="M-13 -13.6 L-9.6 -16.4 V-14.6 H-7.2 V-12.6 H-9.6 V-10.8 Z" fill="#dccbea" /><path d="M17.2 15 L17.2 10.8 L13 15 Z" fill="#8c8c8c" /></g>
<g transform="translate(831 776.9)" ><g transform="rotate(0)"><path d="M0 -11.6 L2.8 -7.4 L-2.8 -7.4 Z" fill="#dccbea" /></g><g transform="rotate(90)"><path d="M0 -11.6 L2.8 -7.4 L-2.8 -7.4 Z" fill="#dccbea" /></g><g transform="rotate(180)"><path d="M0 -11.6 L2.8 -7.4 L-2.8 -7.4 Z" fill="#dccbea" /></g><g transform="rotate(270)"><path d="M0 -11.6 L2.8 -7.4 L-2.8 -7.4 Z" fill="#dccbea" /></g><path d="M-6 -5 H5 L7 -7 V4.4 L5 6.4 H-6 Z M5 -5 V6.4" fill="#bdbdbd" stroke="#d4d4d4" stroke-width="1.2" stroke-linejoin="round" stroke-linecap="round" /><path d="M-4.6 -3.6 L3.6 5 M3.6 -3.6 L-4.6 5" fill="none" stroke="#151515" stroke-width="1.6" stroke-linejoin="round" stroke-linecap="round" /><path d="M-0.5 -3 L1.4 -4.4 L-2.4 -4.4 Z M-0.5 4.4 L1.4 5.8 L-2.4 5.8 Z" fill="#dccbea" /><path d="M17.2 15 L17.2 10.8 L13 15 Z" fill="#8c8c8c" /></g>
<g transform="translate(831 811.7)" ><path d="M-14.4 -5.6 L-8.8 -9.8 H3.4 L12.8 1.6 L8.6 6.2 H-5.4 Z" fill="#dccbea" /><path d="M-14.4 -5.6 H-1.4 L8.6 6.2 M-1.4 -5.6 L3.4 -9.8" fill="none" stroke="#5a4a66" stroke-width="0.9" stroke-linejoin="round" stroke-linecap="round" /><path d="M7.2 -13.4 L10.6 -16 V-14.4 H13 V-12.4 H10.6 V-10.8 Z" fill="#dccbea" /><path d="M17.2 15 L17.2 10.8 L13 15 Z" fill="#8c8c8c" /></g>
<g transform="translate(831 846.4)" ><path d="M-7.5 -6.3 L-3.4 -11.1 L11.3 -10.8 L6.5 -5.6 Z M11.3 -10.8 L11.7 3.6 L6.2 8.4 L6.5 -5.6 M6.2 8.4 H-7.9 L-13.7 0.2 L6.5 -5.6 M-7.5 -6.3 V-2" fill="none" stroke="#c4c4c4" stroke-width="1.2" stroke-linejoin="round" stroke-linecap="round" /><circle cx="-13.7" cy="0.2" r="1.8" fill="#e4e4e4"/><path d="M17.2 15 L17.2 10.8 L13 15 Z" fill="#8c8c8c" /></g>
<path d="M304.3 495.5 V751.5" stroke="#585858" stroke-width="1"/>
<path d="M273 527.3 H528" stroke="#5c5c5c" stroke-width="1"/>
<path d="M336.4 495.5 V751.5" stroke="#585858" stroke-width="1"/>
<path d="M273 559.4 H528" stroke="#5c5c5c" stroke-width="1"/>
<path d="M368.4 495.5 V751.5" stroke="#585858" stroke-width="1"/>
<path d="M273 591.5 H528" stroke="#5c5c5c" stroke-width="1"/>
<path d="M400.4 495.5 V751.5" stroke="#585858" stroke-width="1"/>
<path d="M273 623.6 H528" stroke="#5c5c5c" stroke-width="1"/>
<path d="M432.5 495.5 V751.5" stroke="#585858" stroke-width="1"/>
<path d="M273 655.7 H528" stroke="#5c5c5c" stroke-width="1"/>
<path d="M464.5 495.5 V751.5" stroke="#585858" stroke-width="1"/>
<path d="M273 687.8 H528" stroke="#5c5c5c" stroke-width="1"/>
<path d="M496.5 495.5 V751.5" stroke="#585858" stroke-width="1"/>
<path d="M273 719.9 H528" stroke="#5c5c5c" stroke-width="1"/>
<path d="M1446.8 81 V99 M1463.8 81 V99" stroke="#4a4a4a" stroke-width="1"/>
<path d="M1136.4 53 V78" stroke="#5f6e3c" stroke-width="1.4"/>
<g transform="translate(273.3 751.8)"><path d="M-20 0 H-5.5 M5.5 0 H20 M0 -20 V-5.5 M0 5.5 V20" stroke="#0a0a0a" stroke-width="1.2"/><circle r="10" fill="none" stroke="#f4f4f4" stroke-width="1.3" stroke-dasharray="5.2 2.65" stroke-dashoffset="1"/><circle r="10" fill="none" stroke="#e8101c" stroke-width="1.6" stroke-dasharray="1.7 6.15" stroke-dashoffset="2.7"/></g>
<g transform="translate(1535.1 152.7)"><circle r="39.5" fill="#8a8a8a" fill-opacity=".62"/><path d="M0 -32 V32" stroke="#8bc322" stroke-width="2"/><path d="M-32 0 H32" stroke="#f0506a" stroke-width="2"/><circle cx="0" cy="-32.3" r="7.6" fill="#6f7f45" stroke="#8bc322" stroke-width="1.2"/><circle cx="-32" cy="0" r="7.6" fill="#8d4a54" stroke="#e8506a" stroke-width="1.2"/><circle cx="31.5" cy="0" r="8.2" fill="#e8465f"/><circle cx="0" cy="32.5" r="8.4" fill="#7cb51e"/><circle cx="0" cy="0" r="8.8" fill="#4aa0f5" stroke="#86c0ff" stroke-width="1"/></g>
<circle cx="1563" cy="208" r="13.2" fill="#2a2a2a" fill-opacity=".38"/>
<circle cx="1563" cy="238" r="13.2" fill="#2a2a2a" fill-opacity=".38"/>
<circle cx="1563" cy="268" r="13.2" fill="#2a2a2a" fill-opacity=".38"/>
<circle cx="1563" cy="298" r="13.2" fill="#2a2a2a" fill-opacity=".38"/>
<circle cx="778.6" cy="125.8" r="12.8" fill="#2a2a2a" fill-opacity=".32"/>
<circle cx="778.6" cy="155.6" r="12.8" fill="#2a2a2a" fill-opacity=".32"/>
<g transform="translate(797 125) scale(1.1)" ><path d="M1.8 -4 L-2.2 0 L1.8 4" fill="none" stroke="#c8c8c8" stroke-width="1.2" stroke-linecap="round" stroke-linejoin="round"/></g>
<g transform="translate(1581 125) scale(1.1)" ><path d="M1.8 -4 L-2.2 0 L1.8 4" fill="none" stroke="#c8c8c8" stroke-width="1.2" stroke-linecap="round" stroke-linejoin="round"/></g>
<g transform="translate(1637 358.8) scale(1.15)" ><path d="M-3.2 -1.6 L0 1.6 L3.2 -1.6" fill="none" stroke="#cfcfcf" stroke-width="1.3" stroke-linecap="round" stroke-linejoin="round"/></g>
<rect x="1895.0" y="355.5" width="1.5" height="1.5" fill="#262626"/>
<rect x="1895.0" y="358.7" width="1.5" height="1.5" fill="#262626"/>
<rect x="1898.0" y="355.5" width="1.5" height="1.5" fill="#262626"/>
<rect x="1898.0" y="358.7" width="1.5" height="1.5" fill="#262626"/>
<rect x="1901.0" y="355.5" width="1.5" height="1.5" fill="#262626"/>
<rect x="1901.0" y="358.7" width="1.5" height="1.5" fill="#262626"/>
<rect x="1904.0" y="355.5" width="1.5" height="1.5" fill="#262626"/>
<rect x="1904.0" y="358.7" width="1.5" height="1.5" fill="#262626"/>
<g transform="translate(1637 481.8) scale(1.15)" ><path d="M-3.2 -1.6 L0 1.6 L3.2 -1.6" fill="none" stroke="#cfcfcf" stroke-width="1.3" stroke-linecap="round" stroke-linejoin="round"/></g>
<rect x="1895.0" y="478.5" width="1.5" height="1.5" fill="#262626"/>
<rect x="1895.0" y="481.7" width="1.5" height="1.5" fill="#262626"/>
<rect x="1898.0" y="478.5" width="1.5" height="1.5" fill="#262626"/>
<rect x="1898.0" y="481.7" width="1.5" height="1.5" fill="#262626"/>
<rect x="1901.0" y="478.5" width="1.5" height="1.5" fill="#262626"/>
<rect x="1901.0" y="481.7" width="1.5" height="1.5" fill="#262626"/>
<rect x="1904.0" y="478.5" width="1.5" height="1.5" fill="#262626"/>
<rect x="1904.0" y="481.7" width="1.5" height="1.5" fill="#262626"/>
<g transform="translate(1637.5 629.2)" ><path d="M-1.8 -4 L2.2 0 L-1.8 4" fill="none" stroke="#cfcfcf" stroke-width="1.2" stroke-linecap="round" stroke-linejoin="round"/></g>
<rect x="1895.0" y="626.5" width="1.5" height="1.5" fill="#262626"/>
<rect x="1895.0" y="629.7" width="1.5" height="1.5" fill="#262626"/>
<rect x="1898.0" y="626.5" width="1.5" height="1.5" fill="#262626"/>
<rect x="1898.0" y="629.7" width="1.5" height="1.5" fill="#262626"/>
<rect x="1901.0" y="626.5" width="1.5" height="1.5" fill="#262626"/>
<rect x="1901.0" y="629.7" width="1.5" height="1.5" fill="#262626"/>
<rect x="1904.0" y="626.5" width="1.5" height="1.5" fill="#262626"/>
<rect x="1904.0" y="629.7" width="1.5" height="1.5" fill="#262626"/>
<g transform="translate(1637.5 656.2)" ><path d="M-1.8 -4 L2.2 0 L-1.8 4" fill="none" stroke="#cfcfcf" stroke-width="1.2" stroke-linecap="round" stroke-linejoin="round"/></g>
<rect x="1895.0" y="653.5" width="1.5" height="1.5" fill="#262626"/>
<rect x="1895.0" y="656.7" width="1.5" height="1.5" fill="#262626"/>
<rect x="1898.0" y="653.5" width="1.5" height="1.5" fill="#262626"/>
<rect x="1898.0" y="656.7" width="1.5" height="1.5" fill="#262626"/>
<rect x="1901.0" y="653.5" width="1.5" height="1.5" fill="#262626"/>
<rect x="1901.0" y="656.7" width="1.5" height="1.5" fill="#262626"/>
<rect x="1904.0" y="653.5" width="1.5" height="1.5" fill="#262626"/>
<rect x="1904.0" y="656.7" width="1.5" height="1.5" fill="#262626"/>
<g transform="translate(1637.5 683.2)" ><path d="M-1.8 -4 L2.2 0 L-1.8 4" fill="none" stroke="#cfcfcf" stroke-width="1.2" stroke-linecap="round" stroke-linejoin="round"/></g>
<rect x="1895.0" y="680.5" width="1.5" height="1.5" fill="#262626"/>
<rect x="1895.0" y="683.7" width="1.5" height="1.5" fill="#262626"/>
<rect x="1898.0" y="680.5" width="1.5" height="1.5" fill="#262626"/>
<rect x="1898.0" y="683.7" width="1.5" height="1.5" fill="#262626"/>
<rect x="1901.0" y="680.5" width="1.5" height="1.5" fill="#262626"/>
<rect x="1901.0" y="683.7" width="1.5" height="1.5" fill="#262626"/>
<rect x="1904.0" y="680.5" width="1.5" height="1.5" fill="#262626"/>
<rect x="1904.0" y="683.7" width="1.5" height="1.5" fill="#262626"/>
<g transform="translate(1637.5 710.2)" ><path d="M-1.8 -4 L2.2 0 L-1.8 4" fill="none" stroke="#cfcfcf" stroke-width="1.2" stroke-linecap="round" stroke-linejoin="round"/></g>
<rect x="1895.0" y="707.5" width="1.5" height="1.5" fill="#262626"/>
<rect x="1895.0" y="710.7" width="1.5" height="1.5" fill="#262626"/>
<rect x="1898.0" y="707.5" width="1.5" height="1.5" fill="#262626"/>
<rect x="1898.0" y="710.7" width="1.5" height="1.5" fill="#262626"/>
<rect x="1901.0" y="707.5" width="1.5" height="1.5" fill="#262626"/>
<rect x="1901.0" y="710.7" width="1.5" height="1.5" fill="#262626"/>
<rect x="1904.0" y="707.5" width="1.5" height="1.5" fill="#262626"/>
<rect x="1904.0" y="710.7" width="1.5" height="1.5" fill="#262626"/>
<g transform="translate(1637.5 737.2)" ><path d="M-1.8 -4 L2.2 0 L-1.8 4" fill="none" stroke="#cfcfcf" stroke-width="1.2" stroke-linecap="round" stroke-linejoin="round"/></g>
<rect x="1895.0" y="734.5" width="1.5" height="1.5" fill="#262626"/>
<rect x="1895.0" y="737.7" width="1.5" height="1.5" fill="#262626"/>
<rect x="1898.0" y="734.5" width="1.5" height="1.5" fill="#262626"/>
<rect x="1898.0" y="737.7" width="1.5" height="1.5" fill="#262626"/>
<rect x="1901.0" y="734.5" width="1.5" height="1.5" fill="#262626"/>
<rect x="1901.0" y="737.7" width="1.5" height="1.5" fill="#262626"/>
<rect x="1904.0" y="734.5" width="1.5" height="1.5" fill="#262626"/>
<rect x="1904.0" y="737.7" width="1.5" height="1.5" fill="#262626"/>
<g transform="translate(1637.5 764.2)" ><path d="M-1.8 -4 L2.2 0 L-1.8 4" fill="none" stroke="#cfcfcf" stroke-width="1.2" stroke-linecap="round" stroke-linejoin="round"/></g>
<rect x="1895.0" y="761.5" width="1.5" height="1.5" fill="#262626"/>
<rect x="1895.0" y="764.7" width="1.5" height="1.5" fill="#262626"/>
<rect x="1898.0" y="761.5" width="1.5" height="1.5" fill="#262626"/>
<rect x="1898.0" y="764.7" width="1.5" height="1.5" fill="#262626"/>
<rect x="1901.0" y="761.5" width="1.5" height="1.5" fill="#262626"/>
<rect x="1901.0" y="764.7" width="1.5" height="1.5" fill="#262626"/>
<rect x="1904.0" y="761.5" width="1.5" height="1.5" fill="#262626"/>
<rect x="1904.0" y="764.7" width="1.5" height="1.5" fill="#262626"/>
<g transform="translate(1637.5 791.2)" ><path d="M-1.8 -4 L2.2 0 L-1.8 4" fill="none" stroke="#cfcfcf" stroke-width="1.2" stroke-linecap="round" stroke-linejoin="round"/></g>
<rect x="1895.0" y="788.5" width="1.5" height="1.5" fill="#262626"/>
<rect x="1895.0" y="791.7" width="1.5" height="1.5" fill="#262626"/>
<rect x="1898.0" y="788.5" width="1.5" height="1.5" fill="#262626"/>
<rect x="1898.0" y="791.7" width="1.5" height="1.5" fill="#262626"/>
<rect x="1901.0" y="788.5" width="1.5" height="1.5" fill="#262626"/>
<rect x="1901.0" y="791.7" width="1.5" height="1.5" fill="#262626"/>
<rect x="1904.0" y="788.5" width="1.5" height="1.5" fill="#262626"/>
<rect x="1904.0" y="791.7" width="1.5" height="1.5" fill="#262626"/>
<path d="M1644 443.8 l5.5 3 l-5.5 3 z" fill="#cfcfcf"/>
<rect x="1759.0" y="446.0" width="1.3" height="1.3" fill="#bdbdbd"/>
<rect x="1759.0" y="448.6" width="1.3" height="1.3" fill="#bdbdbd"/>
<rect x="1762.0" y="446.0" width="1.3" height="1.3" fill="#bdbdbd"/>
<rect x="1762.0" y="448.6" width="1.3" height="1.3" fill="#bdbdbd"/>
<rect x="1765.0" y="446.0" width="1.3" height="1.3" fill="#bdbdbd"/>
<rect x="1765.0" y="448.6" width="1.3" height="1.3" fill="#bdbdbd"/>
<rect x="1768.0" y="446.0" width="1.3" height="1.3" fill="#bdbdbd"/>
<rect x="1768.0" y="448.6" width="1.3" height="1.3" fill="#bdbdbd"/>
<path d="M1894 383.5 v9 M1889.5 388 h9" stroke="#e8e8e8" stroke-width="1.1" fill="none"/>
<path d="M1889.5 407 h9" stroke="#8a8a8a" stroke-width="1.1" fill="none"/>
<g transform="translate(1894 434.3) scale(1.15)" ><path d="M-3.2 -1.6 L0 1.6 L3.2 -1.6" fill="none" stroke="#e8e8e8" stroke-width="1.3" stroke-linecap="round" stroke-linejoin="round"/></g>
<path d="M1644 566.3 l5.5 3 l-5.5 3 z" fill="#cfcfcf"/>
<rect x="1759.0" y="568.5" width="1.3" height="1.3" fill="#bdbdbd"/>
<rect x="1759.0" y="571.1" width="1.3" height="1.3" fill="#bdbdbd"/>
<rect x="1762.0" y="568.5" width="1.3" height="1.3" fill="#bdbdbd"/>
<rect x="1762.0" y="571.1" width="1.3" height="1.3" fill="#bdbdbd"/>
<rect x="1765.0" y="568.5" width="1.3" height="1.3" fill="#bdbdbd"/>
<rect x="1765.0" y="571.1" width="1.3" height="1.3" fill="#bdbdbd"/>
<rect x="1768.0" y="568.5" width="1.3" height="1.3" fill="#bdbdbd"/>
<rect x="1768.0" y="571.1" width="1.3" height="1.3" fill="#bdbdbd"/>
<path d="M1894 506.5 v9 M1889.5 511 h9" stroke="#8a8a8a" stroke-width="1.1" fill="none"/>
<path d="M1889.5 530 h9" stroke="#8a8a8a" stroke-width="1.1" fill="none"/>
<g transform="translate(1894 557.3) scale(1.15)" ><path d="M-3.2 -1.6 L0 1.6 L3.2 -1.6" fill="none" stroke="#e8e8e8" stroke-width="1.3" stroke-linecap="round" stroke-linejoin="round"/></g>
<g transform="translate(19.4 39.4)" ><circle cx="0" cy="0" r="4.4" fill="none" stroke="#e6e6e6" stroke-width="2.3"/><circle cx="0" cy="0" r="1.7" fill="#e6e6e6" stroke="none" stroke-width="1"/><path d="M-9.2 2.2 L-3.2 -2.8 M-8 -3.2 H-1 M-2.8 -7.6 L2 -3.8" fill="none" stroke="#e6e6e6" stroke-width="1.9" stroke-linejoin="round" stroke-linecap="round" /></g>
<g transform="translate(20 65)" ><path d="M-7 -6.2 Q-7 -7 -6.2 -7 H-3.6 V7 H-6.2 Q-7 7 -7 6.2 Z" fill="#e6e6e6" /><path d="M-3.6 -6.5 H6.5 V4.6 H-3" fill="none" stroke="#e6e6e6" stroke-width="1.1" stroke-linejoin="round" stroke-linecap="round" /><rect x="-2.6" y="-5.9" width="2.3" height="2.6" fill="#e6e6e6"/><rect x="-2.6" y="-0.7" width="2.3" height="2.6" fill="#e6e6e6"/><rect x="-0.3" y="-3.3" width="2.3" height="2.6" fill="#e6e6e6"/><rect x="-0.3" y="1.9" width="2.3" height="2.6" fill="#e6e6e6"/><rect x="2.0" y="-5.9" width="2.3" height="2.6" fill="#e6e6e6"/><rect x="2.0" y="-0.7" width="2.3" height="2.6" fill="#e6e6e6"/><rect x="4.3" y="-3.3" width="2.3" height="2.6" fill="#e6e6e6"/><rect x="4.3" y="1.9" width="2.3" height="2.6" fill="#e6e6e6"/></g>
<g transform="translate(33.5 65.8)" ><path d="M-3.2 -1.6 L0 1.6 L3.2 -1.6" fill="none" stroke="#e0e0e0" stroke-width="1.3" stroke-linecap="round" stroke-linejoin="round"/></g>
<g transform="translate(18.2 90)" ><path d="M-6.8 -6.8 H6.8 V6.8 H-6.8 Z" fill="none" stroke="#ffffff" stroke-width="1.5" stroke-linejoin="round"  stroke-dasharray="2.6 1.93" stroke-dashoffset="1.3" stroke-linecap="butt"/></g>
<g transform="translate(37 90)" ><path d="M-6.8 -1.6 H-2.6 V-6.8 H7.2 V2.4 H3.2 V6.8 H-6.8 Z" fill="#d2d2d2" /></g>
<g transform="translate(55.4 90)" ><path d="M-2.6 -6.8 H7 V2.6 H3 V-2.2 H-2.6 Z" fill="#d2d2d2" /><path d="M-6.6 -2 H2.8 V6.6 H-6.6 Z" fill="none" stroke="#d2d2d2" stroke-width="1.2" stroke-linejoin="round"  stroke-dasharray="2.2 1.6" stroke-linecap="butt"/></g>
<g transform="translate(314 64.9)" ><path d="M-3.5 7 H-7 V-7 H7 V7 H4.6" fill="none" stroke="#e6e6e6" stroke-width="1.1" stroke-linejoin="round" stroke-linecap="round" /><path d="M-7 7 L-2 -2.6 L3.6 7 Z" fill="#e6e6e6" /><circle cx="2.6" cy="-2.6" r="1.4" fill="#e6e6e6" stroke="none" stroke-width="1"/></g>
<g transform="translate(327.4 65.8)" ><path d="M-3.2 -1.6 L0 1.6 L3.2 -1.6" fill="none" stroke="#e0e0e0" stroke-width="1.3" stroke-linecap="round" stroke-linejoin="round"/></g>
<g transform="translate(345.3 64.9)" ><path d="M0 -4.6 V4.6 M-4.6 0 H4.6" fill="none" stroke="#e6e6e6" stroke-width="1.2" stroke-linejoin="round"  stroke-linecap="butt"/></g>
<g transform="translate(405 65.5)" ><path d="M-7 -6 H-2.2 L-1 -4.4 H7 V-2.8 H-7 Z M-7 -1.8 H7 V6 H-7 Z" fill="#e6e6e6" /></g>
<g transform="translate(469 65)" ><path d="M-6.8 6.6 L-1.9 2" fill="none" stroke="#cfcfcf" stroke-width="1.15" stroke-linejoin="round" stroke-linecap="round" /><path d="M-4.8 -1.6 L-3.3 -2.6 H-0.4 L3 -6.9 L6.8 -3.4 L2.5 0.3 V3.6 L1.6 4.5 Z" fill="none" stroke="#cfcfcf" stroke-width="1.15" stroke-linejoin="round" stroke-linecap="round" /></g>
<g transform="translate(719 65)" ><circle cx="-4.6" cy="4.8" r="1.7" fill="none" stroke="#ffffff" stroke-width="1.1"/><path d="M-3.4 3.6 L5.6 -5.6 M1.6 -6 H6 V-1.6" fill="none" stroke="#ffffff" stroke-width="1.2" stroke-linejoin="round" stroke-linecap="round" /><path d="M-7 -3.6 C0 -3.6 4.6 0.6 4.8 6.8" fill="none" stroke="#ffffff" stroke-width="1.2" stroke-linejoin="round" stroke-linecap="round" /></g>
<g transform="translate(738.5 65.8)" ><path d="M-3.2 -1.6 L0 1.6 L3.2 -1.6" fill="none" stroke="#e0e0e0" stroke-width="1.3" stroke-linecap="round" stroke-linejoin="round"/></g>
<g transform="translate(764.2 65)" ><circle cx="2" cy="-1.6" r="4.9" fill="#ffffff" stroke="none" stroke-width="1"/><path d="M-0.6 5.2 A4.6 4.6 0 1 1 -3.8 -2.6" fill="none" stroke="#ffffff" stroke-width="1.2" stroke-linejoin="round" stroke-linecap="round" /><path d="M-1.2 -2.2 A4.6 4.6 0 0 1 1.4 2.2" fill="none" stroke="#4f7ec8" stroke-width="1.1" stroke-linejoin="round" stroke-linecap="round" /></g>
<g transform="translate(783.3 65.8)" ><path d="M-3.2 -1.6 L0 1.6 L3.2 -1.6" fill="none" stroke="#e0e0e0" stroke-width="1.3" stroke-linecap="round" stroke-linejoin="round"/></g>
<g transform="translate(778.6 125.8)" ><circle cx="1.8" cy="-1.8" r="6.2" fill="#e8e8e8" stroke="none" stroke-width="1"/><path d="M-2.8 2.8 L-7.4 7.2" fill="none" stroke="#e8e8e8" stroke-width="2" stroke-linejoin="round" stroke-linecap="round" /><path d="M1.8 -4.8 V1.2 M-1.2 -1.8 H4.8" fill="none" stroke="#2a2a2a" stroke-width="1.2" stroke-linejoin="round"  stroke-linecap="butt"/></g>
<g transform="translate(778.6 155.6)" ><path d="M-3.4 7.6 C-5.6 5.6 -7.4 2.6 -8.2 0.8 C-8.6 -0.4 -7 -1.2 -6.2 0 L-4.4 2.2 L-4.8 -5.2 C-4.8 -6.6 -3 -6.6 -2.8 -5.2 L-2.2 -0.8 L-1.8 -7 C-1.8 -8.4 0.2 -8.4 0.2 -7 L0.4 -0.8 L1.6 -6.2 C1.9 -7.6 3.7 -7.2 3.5 -5.8 L2.8 -0.2 L4.6 -3.8 C5.2 -5 6.8 -4.2 6.3 -3 C5.2 0.4 5.4 3.2 3.8 5.6 C2.8 7.2 1.6 7.8 0.4 7.8 Z" fill="#e8e8e8" /></g>
<g transform="translate(824.4 64.2)" ><path d="M-7.4 0.4 H5 M-7.4 4.8 H5.6 M-3.6 -2.6 L-5.4 7.2 M2 2 L3.2 7.2" fill="none" stroke="#e6e6e6" stroke-width="1.1" stroke-linejoin="round" stroke-linecap="round" /><circle cx="1.8" cy="-3.6" r="3.4" fill="#e6e6e6" stroke="none" stroke-width="1"/><circle cx="0.8" cy="-4.6" r="1" fill="#8a8a8a" stroke="none" stroke-width="1"/></g>
<g transform="translate(836.6 65.2)" ><path d="M-3.2 -1.6 L0 1.6 L3.2 -1.6" fill="none" stroke="#e0e0e0" stroke-width="1.3" stroke-linecap="round" stroke-linejoin="round"/></g>
<g transform="translate(861 64.2)" ><path d="M-5.2 -4.4 V5.2 H4.4 V-1 M-5.2 -4.4 H0.6" fill="none" stroke="#e6e6e6" stroke-width="1.1" stroke-linejoin="round" stroke-linecap="round" /><rect x="-6.7" y="-6.1" width="3" height="3" fill="#2e2e2e" stroke="#e6e6e6" stroke-width="1"/><rect x="-6.7" y="3.7" width="3" height="3" fill="#2e2e2e" stroke="#e6e6e6" stroke-width="1"/><rect x="3.0999999999999996" y="3.7" width="3" height="3" fill="#2e2e2e" stroke="#e6e6e6" stroke-width="1"/><rect x="2.4" y="-7.4" width="4.6" height="4.6" fill="#e6e6e6"/></g>
<g transform="translate(940.6 65.2)" ><path d="M-3.2 -1.6 L0 1.6 L3.2 -1.6" fill="none" stroke="#e0e0e0" stroke-width="1.3" stroke-linecap="round" stroke-linejoin="round"/></g>
<g transform="translate(962.2 64.4)" ><path d="M-3 -3 V-6 H6.8 V2 L3 5.8 H-3 V1" fill="none" stroke="#e6e6e6" stroke-width="1.1" stroke-linejoin="round" stroke-linecap="round" /><rect x="-5.4" y="-3.2" width="4.4" height="4.4" fill="#e6e6e6"/></g>
<g transform="translate(981.4 64.4)" ><path d="M-0.2 5.8 H-5.8 V-2 L-2 -6 H6.4 V2 L3.6 4.8" fill="none" stroke="#e6e6e6" stroke-width="1.1" stroke-linejoin="round" stroke-linecap="round" stroke-opacity=".8"/><rect x="0.4" y="-3.4" width="2.8" height="10" fill="#e6e6e6"/></g>
<g transform="translate(1001.4 64.4)" ><path d="M-3 -4 L-0.6 -6.6 H6.8 V2.6 L4.4 5" fill="none" stroke="#ffffff" stroke-width="1.1" stroke-linejoin="round" stroke-linecap="round" stroke-opacity=".75"/><rect x="-6.4" y="-3.6" width="10.2" height="10.2" fill="#ffffff"/></g>
<g transform="translate(821 90.2)" ><path d="M-6.8 -6.8 H6.8 V6.8 H-6.8 Z" fill="none" stroke="#ffffff" stroke-width="1.5" stroke-linejoin="round"  stroke-dasharray="2.6 1.93" stroke-dashoffset="1.3" stroke-linecap="butt"/></g>
<g transform="translate(840 90.2)" ><path d="M-6.8 -1.6 H-2.6 V-6.8 H7.2 V2.4 H3.2 V6.8 H-6.8 Z" fill="#d2d2d2" /></g>
<g transform="translate(858.7 90.2)" ><path d="M-2.6 -6.8 H7 V2.6 H3 V-2.2 H-2.6 Z" fill="#d2d2d2" /><path d="M-6.6 -2 H2.8 V6.6 H-6.6 Z" fill="none" stroke="#d2d2d2" stroke-width="1.2" stroke-linejoin="round"  stroke-dasharray="2.2 1.6" stroke-linecap="butt"/></g>
<g transform="translate(877.5 90.2)" ><path d="M-6.8 -1.6 H-2.6 V2.4 H3.2 V6.8 H-6.8 Z M-2.6 -6.8 H7.2 V2.4 H3.2 V-1.6 H-2.6 Z" fill="#d2d2d2" /></g>
<g transform="translate(896.4 90.2)" ><path d="M-3.2 -3.2 H3.2 V3.2 H-3.2 Z" fill="#d2d2d2" /><path d="M-6.8 -6.8 H6.8 V6.8 H-6.8 Z" fill="none" stroke="#d2d2d2" stroke-width="1.2" stroke-linejoin="round"  stroke-dasharray="2.4 1.7" stroke-dashoffset="1.2" stroke-linecap="butt"/></g>
<g transform="translate(1375.6 64.1)" ><path d="M-5 4.4 V-6.6 M-7.2 -4.4 L-5 -6.8 L-2.8 -4.4 M-5 4.4 H6.6 M4.4 2.2 L6.8 4.4 L4.4 6.6 M-4 3.4 L1.6 -2.4 M-1.2 -2.6 H1.8 V0.4" fill="none" stroke="#e6e6e6" stroke-width="1.05" stroke-linejoin="round" stroke-linecap="round" /><circle cx="-5" cy="4.4" r="1.5" fill="#353535" stroke="#e6e6e6" stroke-width="1"/></g>
<g transform="translate(1435.3 65.2)" ><path d="M-3.2 -1.6 L0 1.6 L3.2 -1.6" fill="none" stroke="#e0e0e0" stroke-width="1.3" stroke-linecap="round" stroke-linejoin="round"/></g>
<g transform="translate(1459.2 64.1)" ><circle cx="2.6" cy="-2.4" r="4.6" fill="none" stroke="#e6e6e6" stroke-width="1.15"/><circle cx="-2.4" cy="2.6" r="4.6" fill="none" stroke="#e6e6e6" stroke-width="1.15"/><circle cx="0.3" cy="0" r="1.5" fill="#e6e6e6" stroke="none" stroke-width="1"/></g>
<g transform="translate(1472.6 65.2)" ><path d="M-3.2 -1.6 L0 1.6 L3.2 -1.6" fill="none" stroke="#e0e0e0" stroke-width="1.3" stroke-linecap="round" stroke-linejoin="round"/></g>
<g transform="translate(1494 64.1)" ><path d="M-6.4 -2.6 L-2.2 -6.6 C2 -9.6 8.6 -3.4 5 1.4 L-0.4 7 L-3 4.4 L2.2 -0.8 C4 -3 0.6 -5.6 -1.2 -3.6 L-3.8 -0.2 Z" fill="none" stroke="#d0d0d0" stroke-width="1" stroke-linejoin="round" stroke-linecap="round" /></g>
<g transform="translate(1514 64.1)" ><path d="M-6.6 -0.2 V7 M-2.2 1.8 V5.4 M2.2 1.8 V5.4 M6.6 -0.2 V7 M-6.6 3.6 H6.6" fill="none" stroke="#e6e6e6" stroke-width="1.1" stroke-linejoin="round"  stroke-linecap="butt"/><rect x="4" y="-7.2" width="3.8" height="3.8" fill="#e6e6e6"/></g>
<g transform="translate(1529.5 65.2)" ><path d="M-3.2 -1.6 L0 1.6 L3.2 -1.6" fill="none" stroke="#e0e0e0" stroke-width="1.3" stroke-linecap="round" stroke-linejoin="round"/></g>
<g transform="translate(1551 64.1)" ><circle cx="0" cy="0" r="6.4" fill="none" stroke="#9a9a9a" stroke-width="1"/><circle cx="0" cy="0" r="2.2" fill="#d6d6d6" stroke="none" stroke-width="1"/></g>
<g transform="translate(1570 64.1)" ><path d="M-7 6.4 C-2.6 6 -2.6 -6.6 0 -6.6 C2.6 -6.6 2.6 6 7 6.4" fill="none" stroke="#c8c8c8" stroke-width="1.1" stroke-linejoin="round" stroke-linecap="round" /></g>
<g transform="translate(1418.5 90.1)" ><path d="M0 -7.4 V7.4" fill="none" stroke="#ffffff" stroke-width="1.1" stroke-linejoin="round"  stroke-dasharray="2 1.3" stroke-linecap="butt"/><path d="M-2.4 -1 C-3 -5.6 -7.4 -7 -7 -3.6 C-6.8 -1.6 -4.6 -0.6 -3.8 -0.4 C-6 0.4 -7.2 2.6 -6 4.8 C-4.6 7 -2.2 5.4 -2.4 2" fill="none" stroke="#d0d0d0" stroke-width="1" stroke-linejoin="round" stroke-linecap="round" /><path d="M2.4 -1 C3 -5.6 7.4 -7 7 -3.6 C6.8 -1.6 4.6 -0.6 3.8 -0.4 C6 0.4 7.2 2.6 6 4.8 C4.6 7 2.2 5.4 2.4 2" fill="none" stroke="#d0d0d0" stroke-width="1" stroke-linejoin="round" stroke-linecap="round" /></g>
<g transform="translate(1497 90.1)" ><path d="M-4 3 C-3.6 -1.4 -0.6 -4 3.2 -4.4 M-3 5.6 C1.6 5.2 4.4 2.4 4.8 -2.6" fill="none" stroke="#8e8e8e" stroke-width="1" stroke-linejoin="round" stroke-linecap="round" stroke-dasharray="2.2 1.6"/><rect x="-6.8" y="3.2" width="3.2" height="3.2" fill="none" stroke="#8e8e8e" stroke-width="1"/><rect x="3.6" y="-6.6" width="3.2" height="3.2" fill="none" stroke="#8e8e8e" stroke-width="1"/></g>
<g transform="translate(1572.6 90.8)" ><path d="M-3.2 -1.6 L0 1.6 L3.2 -1.6" fill="none" stroke="#e0e0e0" stroke-width="1.3" stroke-linecap="round" stroke-linejoin="round"/></g>
<g transform="translate(1595 38)" ><path d="M-6.2 4.4 C-7 4.4 -7.2 3.8 -6.8 3 L-3.4 -6.2 C-3 -7.2 -2.4 -7.2 -2 -6.2 L0.2 -0.8 C-1.6 0.4 -2.4 2.4 -2 4.4 Z" fill="#e6e6e6" /><circle cx="5" cy="-5.2" r="1.9" fill="#e6e6e6" stroke="none" stroke-width="1"/><circle cx="3.4" cy="3.4" r="3.6" fill="none" stroke="#e6e6e6" stroke-width="1.1"/><path d="M1.6 2.4 C2.4 1.2 3.6 1 4.6 1.4" fill="none" stroke="#e6e6e6" stroke-width="0.9" stroke-linejoin="round" stroke-linecap="round" /></g>
<g transform="translate(1608.9 38.8)" ><path d="M-3.2 -1.6 L0 1.6 L3.2 -1.6" fill="none" stroke="#e0e0e0" stroke-width="1.3" stroke-linecap="round" stroke-linejoin="round"/></g>
<g transform="translate(1703.3 38.2)" ><path d="M-6.8 6.6 L-1.9 2" fill="none" stroke="#b0b0b0" stroke-width="1.15" stroke-linejoin="round" stroke-linecap="round" /><path d="M-4.8 -1.6 L-3.3 -2.6 H-0.4 L3 -6.9 L6.8 -3.4 L2.5 0.3 V3.6 L1.6 4.5 Z" fill="none" stroke="#b0b0b0" stroke-width="1.15" stroke-linejoin="round" stroke-linecap="round" /></g>
<g transform="translate(1724.6 38)" ><path d="M-2.4 -7 H3.6 L6.8 -3.8 V3.6 H-2.4 Z M3.4 -7 V-3.6 H6.8" fill="none" stroke="#e6e6e6" stroke-width="1.1" stroke-linejoin="round" stroke-linecap="round" /><path d="M-2.6 -3.6 H-6 V7 H1.6 V3.8" fill="none" stroke="#e6e6e6" stroke-width="1.1" stroke-linejoin="round" stroke-linecap="round" /></g>
<g transform="translate(1744.8 38)" ><path d="M-4 -4 L4 4 M4 -4 L-4 4" fill="none" stroke="#8a8a8a" stroke-width="1.1" stroke-linejoin="round" stroke-linecap="round" /></g>
<g transform="translate(1772 38)" ><path d="M-6.8 -2.4 V6.8 H2.4 M-4.4 -4.6 V4.4 H4.6" fill="none" stroke="#e6e6e6" stroke-width="1" stroke-linejoin="round" stroke-linecap="round" /><path d="M-2 -7 H7 V2 H-2 Z" fill="none" stroke="#e6e6e6" stroke-width="1.1" stroke-linejoin="round" stroke-linecap="round" /><path d="M-2 2 L1.6 -4 L4.2 0 L5.2 -1.2 L7 2 Z" fill="#e6e6e6" /><circle cx="4.8" cy="-4.6" r="1" fill="#e6e6e6" stroke="none" stroke-width="1"/></g>
<g transform="translate(1785 38.8)" ><path d="M-3.2 -1.6 L0 1.6 L3.2 -1.6" fill="none" stroke="#e0e0e0" stroke-width="1.3" stroke-linecap="round" stroke-linejoin="round"/></g>
<g transform="translate(1881.6 38)" ><path d="M-2.4 -7 H3.6 L6.8 -3.8 V3.6 H-2.4 Z M3.4 -7 V-3.6 H6.8" fill="none" stroke="#e6e6e6" stroke-width="1.1" stroke-linejoin="round" stroke-linecap="round" /><path d="M-2.6 -3.6 H-6 V7 H1.6 V3.8" fill="none" stroke="#e6e6e6" stroke-width="1.1" stroke-linejoin="round" stroke-linecap="round" /></g>
<g transform="translate(1901.6 38)" ><path d="M-4 -4 L4 4 M4 -4 L-4 4" fill="none" stroke="#8a8a8a" stroke-width="1.1" stroke-linejoin="round" stroke-linecap="round" /></g>
<g transform="translate(1608 64)" ><rect x="-7" y="-7" width="5.4" height="2.6" fill="#e6e6e6"/><rect x="0" y="-1.8" width="7" height="2.8" fill="#e6e6e6"/><rect x="0" y="3.4" width="7" height="2.8" fill="#e6e6e6"/><path d="M-4.6 -4 V4.8 H-1.4 M-4.6 -0.4 H-1.4" fill="none" stroke="#e6e6e6" stroke-width="1" stroke-linejoin="round"  stroke-linecap="butt"/></g>
<g transform="translate(1621.2 65)" ><path d="M-3.2 -1.6 L0 1.6 L3.2 -1.6" fill="none" stroke="#e0e0e0" stroke-width="1.3" stroke-linecap="round" stroke-linejoin="round"/></g>
<g transform="translate(1645.2 64)" ><path d="M-6.8 -2.4 V6.8 H2.4 M-4.4 -4.6 V4.4 H4.6" fill="none" stroke="#e6e6e6" stroke-width="1" stroke-linejoin="round" stroke-linecap="round" /><path d="M-2 -7 H7 V2 H-2 Z" fill="none" stroke="#e6e6e6" stroke-width="1.1" stroke-linejoin="round" stroke-linecap="round" /><path d="M-2 2 L1.6 -4 L4.2 0 L5.2 -1.2 L7 2 Z" fill="#e6e6e6" /><circle cx="4.8" cy="-4.6" r="1" fill="#e6e6e6" stroke="none" stroke-width="1"/></g>
<g transform="translate(1658.6 65)" ><path d="M-3.2 -1.6 L0 1.6 L3.2 -1.6" fill="none" stroke="#e0e0e0" stroke-width="1.3" stroke-linecap="round" stroke-linejoin="round"/></g>
<g transform="translate(1694.6 64)" ><circle cx="1.8" cy="-1.9" r="4.9" fill="none" stroke="#e6e6e6" stroke-width="1.2"/><path d="M-1.6 1.6 L-6.6 6.8" fill="none" stroke="#e6e6e6" stroke-width="1.3" stroke-linejoin="round" stroke-linecap="round" /></g>
<g transform="translate(1866 64)" ><path d="M-7 -6.4 H7 L1.4 0.6 V5.6 L-1.4 7 V0.6 Z" fill="none" stroke="#e6e6e6" stroke-width="1.1" stroke-linejoin="round" stroke-linecap="round" /></g>
<g transform="translate(1880 65)" ><path d="M-3.2 -1.6 L0 1.6 L3.2 -1.6" fill="none" stroke="#e0e0e0" stroke-width="1.3" stroke-linecap="round" stroke-linejoin="round"/></g>
<g transform="translate(1902 64)" ><path d="M-7 -2.6 H2 M-6 -2.6 V6.6 H4.6 V2.4 M-2.2 1.4 H1" fill="none" stroke="#e6e6e6" stroke-width="1.1" stroke-linejoin="round" stroke-linecap="round" /><path d="M-7 -5.8 H1.2" fill="none" stroke="#e6e6e6" stroke-width="1.1" stroke-linejoin="round" stroke-linecap="round" /><circle cx="4.2" cy="-3.6" r="3.4" fill="none" stroke="#e6e6e6" stroke-width="1"/><path d="M4.2 -5.6 V-1.6 M2.2 -3.6 H6.2" fill="none" stroke="#e6e6e6" stroke-width="1" stroke-linejoin="round" stroke-linecap="round" /></g>
<g transform="translate(1617.8 89)" ><path d="M-7 -6.6 H7 V-3 H-7 Z M-6 -2 H6 V6.6 H-6 Z M-1.8 -0.2 H1.8 V1.2 H-1.8 Z" fill="#e6e6e6" fill-rule="evenodd"/></g>
<g transform="translate(1617.6 109.6) scale(1.1)" ><path d="M-3.2 -1.6 L0 1.6 L3.2 -1.6" fill="none" stroke="#cfcfcf" stroke-width="1.3" stroke-linecap="round" stroke-linejoin="round"/></g>
<g transform="translate(1638.2 108.8)" ><path d="M-7 -6.6 H7 V-3 H-7 Z M-6 -2 H6 V6.6 H-6 Z M-1.8 -0.2 H1.8 V1.2 H-1.8 Z" fill="#e6e6e6" fill-rule="evenodd"/></g>
<path d="M1617.5 122 V192" stroke="#6a6a6a" stroke-width="1"/>
<g transform="translate(1638.3 128.6) scale(0.95)" ><path d="M-1.8 -4 L2.2 0 L-1.8 4" fill="none" stroke="#cfcfcf" stroke-width="1.2" stroke-linecap="round" stroke-linejoin="round"/></g>
<g transform="translate(1638.3 148.6) scale(0.95)" ><path d="M-1.8 -4 L2.2 0 L-1.8 4" fill="none" stroke="#cfcfcf" stroke-width="1.2" stroke-linecap="round" stroke-linejoin="round"/></g>
<g transform="translate(1638.3 168.6) scale(0.95)" ><path d="M-1.8 -4 L2.2 0 L-1.8 4" fill="none" stroke="#cfcfcf" stroke-width="1.2" stroke-linecap="round" stroke-linejoin="round"/></g>
<g transform="translate(1638.3 188.6) scale(0.95)" ><path d="M-1.8 -4 L2.2 0 L-1.8 4" fill="none" stroke="#cfcfcf" stroke-width="1.2" stroke-linecap="round" stroke-linejoin="round"/></g>
<g transform="translate(1658 128.4)" ><circle cx="-3.4" cy="-3.8" r="2.9" fill="#e8a45f" stroke="none" stroke-width="1"/><circle cx="3.2" cy="-4.2" r="2.4" fill="#e8a45f" stroke="none" stroke-width="1"/><path d="M-6.6 -0.6 H3.4 V5.6 H-6.6 Z M4.2 2.6 L7.4 0.4 V5.2 Z" fill="#e8a45f" /><circle cx="-3.4" cy="-3.8" r="1" fill="#393938" stroke="none" stroke-width="1"/><circle cx="3.2" cy="-4.2" r="0.8" fill="#393938" stroke="none" stroke-width="1"/><path d="M-4.4 5.6 L-5.6 7.4 M1 5.6 L2.2 7.4" fill="none" stroke="#e8a45f" stroke-width="1.1" stroke-linejoin="round" stroke-linecap="round" /></g>
<g transform="translate(1658 148.8)" ><path d="M-5.6 -5.4 H5.6 L0 5.6 Z" fill="none" stroke="#e8a45f" stroke-width="2.1" stroke-linejoin="round" stroke-linecap="round" stroke-linejoin="miter"/></g>
<g transform="translate(1658 168.8)" ><path d="M-5.6 -5.4 H5.6 L0 5.6 Z" fill="none" stroke="#e8a45f" stroke-width="2.1" stroke-linejoin="round" stroke-linecap="round" stroke-linejoin="miter"/></g>
<g transform="translate(1658 188.2)" ><path d="M-2.6 3.2 C-2.6 1.4 -5.4 0 -5.4 -2.8 C-5.4 -6 -2.8 -7.6 0 -7.6 C2.8 -7.6 5.4 -6 5.4 -2.8 C5.4 0 2.6 1.4 2.6 3.2 Z" fill="#e8a45f" /><path d="M-2.4 4.6 H2.4 M-2.4 6.2 H2.4" fill="none" stroke="#e8a45f" stroke-width="1" stroke-linejoin="round"  stroke-linecap="butt"/><path d="M-1.2 7 H1.2 L0 8 Z" fill="#e8a45f" /><path d="M-1.8 -2.4 V0.6 M1.8 -2.4 V0.6 M-1.8 -1.6 H1.8" fill="none" stroke="#393938" stroke-width="0.9" stroke-linejoin="round" stroke-linecap="round" /></g>
<g transform="translate(1742 128.4)" ><circle cx="-2.6" cy="-3.6" r="2.6" fill="none" stroke="#21d4ae" stroke-width="1.05"/><circle cx="3" cy="-3.8" r="2" fill="none" stroke="#21d4ae" stroke-width="1.05"/><path d="M-5.6 0.6 H2.8 V5.6 H-5.6 Z M3.8 3 L6.8 1 V5.4 Z M-7.2 2 V4 M-5.6 3 H-7.2" fill="none" stroke="#21d4ae" stroke-width="1.05" stroke-linejoin="round" stroke-linecap="round" /></g>
<g transform="translate(1728.6 188.4)" ><path d="M-3.2 5.2 A6.2 6.2 0 1 1 3.2 5.2" fill="none" stroke="#21d4ae" stroke-width="1.05" stroke-linejoin="round" stroke-linecap="round" /><circle cx="0" cy="-0.6" r="1.1" fill="#21d4ae" stroke="none" stroke-width="1"/><path d="M0 1.4 V4.6 M0 6.2 V7.6" fill="none" stroke="#21d4ae" stroke-width="1.05" stroke-linejoin="round" stroke-linecap="round" /></g>
<g transform="translate(1860 108.6)" ><rect x="-5" y="-5" width="10" height="10" rx="1.5" fill="#e6e6e6"/><path d="M-2.8 0.2 L-0.8 2.4 L3 -2.6" fill="none" stroke="#2e2e2e" stroke-width="1.6" stroke-linejoin="round" stroke-linecap="round" /></g>
<g transform="translate(1879.6 108.0)" ><path d="M-7 0 C-4.4 -4.6 4.4 -4.6 7 0 C4.4 4.6 -4.4 4.6 -7 0 Z M0 -3.1 A3.1 3.1 0 1 0 0.01 -3.1 Z" fill="#e6e6e6" fill-rule="evenodd"/><circle cx="0" cy="0" r="1.7" fill="#e6e6e6" stroke="none" stroke-width="1"/></g>
<g transform="translate(1899.6 107.8)" ><path d="M-6.8 -3.6 H-3.4 L-2.2 -5.6 H2.2 L3.4 -3.6 H6.8 V5.6 H-6.8 Z M0 -2.6 A3.6 3.6 0 1 0 0.01 -2.6 Z" fill="#e6e6e6" fill-rule="evenodd"/><circle cx="0" cy="1" r="2.3" fill="none" stroke="#e6e6e6" stroke-width="1"/></g>
<g transform="translate(1879.6 128.0)" ><path d="M-7 0 C-4.4 -4.6 4.4 -4.6 7 0 C4.4 4.6 -4.4 4.6 -7 0 Z M0 -3.1 A3.1 3.1 0 1 0 0.01 -3.1 Z" fill="#e6e6e6" fill-rule="evenodd"/><circle cx="0" cy="0" r="1.7" fill="#e6e6e6" stroke="none" stroke-width="1"/></g>
<g transform="translate(1899.6 127.8)" ><path d="M-6.8 -3.6 H-3.4 L-2.2 -5.6 H2.2 L3.4 -3.6 H6.8 V5.6 H-6.8 Z M0 -2.6 A3.6 3.6 0 1 0 0.01 -2.6 Z" fill="#e6e6e6" fill-rule="evenodd"/><circle cx="0" cy="1" r="2.3" fill="none" stroke="#e6e6e6" stroke-width="1"/></g>
<g transform="translate(1879.6 148.0)" ><path d="M-7 0 C-4.4 -4.6 4.4 -4.6 7 0 C4.4 4.6 -4.4 4.6 -7 0 Z M0 -3.1 A3.1 3.1 0 1 0 0.01 -3.1 Z" fill="#e6e6e6" fill-rule="evenodd"/><circle cx="0" cy="0" r="1.7" fill="#e6e6e6" stroke="none" stroke-width="1"/></g>
<g transform="translate(1899.6 147.79999999999998)" ><path d="M-6.8 -3.6 H-3.4 L-2.2 -5.6 H2.2 L3.4 -3.6 H6.8 V5.6 H-6.8 Z M0 -2.6 A3.6 3.6 0 1 0 0.01 -2.6 Z" fill="#e6e6e6" fill-rule="evenodd"/><circle cx="0" cy="1" r="2.3" fill="none" stroke="#e6e6e6" stroke-width="1"/></g>
<g transform="translate(1879.6 168.0)" ><path d="M-7 0 C-4.4 -4.6 4.4 -4.6 7 0 C4.4 4.6 -4.4 4.6 -7 0 Z M0 -3.1 A3.1 3.1 0 1 0 0.01 -3.1 Z" fill="#e6e6e6" fill-rule="evenodd"/><circle cx="0" cy="0" r="1.7" fill="#e6e6e6" stroke="none" stroke-width="1"/></g>
<g transform="translate(1899.6 167.79999999999998)" ><path d="M-6.8 -3.6 H-3.4 L-2.2 -5.6 H2.2 L3.4 -3.6 H6.8 V5.6 H-6.8 Z M0 -2.6 A3.6 3.6 0 1 0 0.01 -2.6 Z" fill="#e6e6e6" fill-rule="evenodd"/><circle cx="0" cy="1" r="2.3" fill="none" stroke="#e6e6e6" stroke-width="1"/></g>
<g transform="translate(1879.6 188.0)" ><path d="M-7 0 C-4.4 -4.6 4.4 -4.6 7 0 C4.4 4.6 -4.4 4.6 -7 0 Z M0 -3.1 A3.1 3.1 0 1 0 0.01 -3.1 Z" fill="#e6e6e6" fill-rule="evenodd"/><circle cx="0" cy="0" r="1.7" fill="#e6e6e6" stroke="none" stroke-width="1"/></g>
<g transform="translate(1899.6 187.79999999999998)" ><path d="M-6.8 -3.6 H-3.4 L-2.2 -5.6 H2.2 L3.4 -3.6 H6.8 V5.6 H-6.8 Z M0 -2.6 A3.6 3.6 0 1 0 0.01 -2.6 Z" fill="#e6e6e6" fill-rule="evenodd"/><circle cx="0" cy="1" r="2.3" fill="none" stroke="#e6e6e6" stroke-width="1"/></g>
<circle cx="1598" cy="148.2" r="2" fill="#e6e6e6"/>
<g transform="translate(1598 168.4) scale(0.95)" ><path d="M-5.2 -4.4 V5.2 H4.4 V-1 M-5.2 -4.4 H0.6" fill="none" stroke="#d8d8d8" stroke-width="1.1" stroke-linejoin="round" stroke-linecap="round" /><rect x="-6.7" y="-6.1" width="3" height="3" fill="#2e2e2e" stroke="#d8d8d8" stroke-width="1"/><rect x="-6.7" y="3.7" width="3" height="3" fill="#2e2e2e" stroke="#d8d8d8" stroke-width="1"/><rect x="3.0999999999999996" y="3.7" width="3" height="3" fill="#2e2e2e" stroke="#d8d8d8" stroke-width="1"/><rect x="2.4" y="-7.4" width="4.6" height="4.6" fill="#d8d8d8"/></g>
<g transform="translate(1608 259.4)" ><path d="M-6.8 -2.6 H6.8 V3.6 Q6.8 5.6 4.8 5.6 H-4.8 Q-6.8 5.6 -6.8 3.6 Z" fill="#e6e6e6" /></g>
<g transform="translate(1621 259.5)" ><path d="M-3.2 -1.6 L0 1.6 L3.2 -1.6" fill="none" stroke="#e0e0e0" stroke-width="1.3" stroke-linecap="round" stroke-linejoin="round"/></g>
<g transform="translate(1706.6 258)" ><circle cx="1.8" cy="-1.9" r="4.9" fill="none" stroke="#e6e6e6" stroke-width="1.2"/><path d="M-1.6 1.6 L-6.6 6.8" fill="none" stroke="#e6e6e6" stroke-width="1.3" stroke-linejoin="round" stroke-linecap="round" /></g>
<g transform="translate(1902 259)" ><path d="M-3.2 -1.6 L0 1.6 L3.2 -1.6" fill="none" stroke="#e0e0e0" stroke-width="1.3" stroke-linecap="round" stroke-linejoin="round"/></g>
<g transform="translate(1602.8 292.9)" ><path d="M-4.4 -6.6 V0.2" fill="none" stroke="#cfcfcf" stroke-width="1.1" stroke-linejoin="round"  stroke-linecap="butt"/><rect x="-6.6" y="0.2" width="4.6" height="1.4" fill="#cfcfcf"/><circle cx="-4.4" cy="4" r="2.6" fill="#a8a8a8" stroke="none" stroke-width="1"/><path d="M1.4 -6.8 C0.4 -4 1.4 -2.4 2.8 -1.6 V5.8 C2.8 7.4 5.2 7.4 5.2 5.8 V-1.6 C6.6 -2.4 7.6 -4 6.6 -6.8 L5.4 -6.8 V-3.8 H2.6 V-6.8 Z" fill="#cfcfcf" /><circle cx="4" cy="5.6" r="0.7" fill="#2c2c2c" stroke="none" stroke-width="1"/></g>
<g transform="translate(1603 328.5)" ><path d="M-7 -3.6 H-4.6 L-3.6 -6 H0.6 L1.6 -3.6 H7 V6.8 H-7 Z M-5 -1.4 V4.8 H1.6 V-1.4 Z M3.4 -1.6 V0.6 H5.4 V-1.6 Z M3.4 2.6 V4.8 H5.4 V2.6 Z" fill="#cfcfcf" fill-rule="evenodd"/><path d="M-4.6 0.2 H1.2 M-4.6 1.8 H1.2 M-4.6 3.4 H1.2" fill="none" stroke="#cfcfcf" stroke-width="0.8" stroke-linejoin="round"  stroke-linecap="butt"/></g>
<g transform="translate(1603 357)" ><path d="M-7 -6.4 Q-7 -7.4 -6 -7.4 H6 Q7 -7.4 7 -6.4 V-1.4 H5 V-3.6 H-5 V-1.4 H-7 Z" fill="#cfcfcf" /><path d="M-4 -2.6 H4 V6 H-4 Z" fill="#9a9a9a" /><path d="M-3 4.6 L-0.4 0.4 L1.8 4.6 Z" fill="#2c2c2c" /><circle cx="2.2" cy="-0.6" r="0.9" fill="#2c2c2c" stroke="none" stroke-width="1"/></g>
<g transform="translate(1603 385)" ><path d="M-6.8 -2.4 V6.8 H2.4 M-4.4 -4.6 V4.4 H4.6" fill="none" stroke="#cfcfcf" stroke-width="1" stroke-linejoin="round" stroke-linecap="round" /><path d="M-2 -7 H7 V2 H-2 Z" fill="none" stroke="#cfcfcf" stroke-width="1.1" stroke-linejoin="round" stroke-linecap="round" /><path d="M-2 2 L1.6 -4 L4.2 0 L5.2 -1.2 L7 2 Z" fill="#cfcfcf" /><circle cx="4.8" cy="-4.6" r="1" fill="#cfcfcf" stroke="none" stroke-width="1"/></g>
<g transform="translate(1602.6 413)" ><path d="M-6.2 4.4 C-7 4.4 -7.2 3.8 -6.8 3 L-3.4 -6.2 C-3 -7.2 -2.4 -7.2 -2 -6.2 L0.2 -0.8 C-1.6 0.4 -2.4 2.4 -2 4.4 Z" fill="#cfcfcf" /><circle cx="5" cy="-5.2" r="1.9" fill="#cfcfcf" stroke="none" stroke-width="1"/><circle cx="3.4" cy="3.4" r="3.6" fill="none" stroke="#cfcfcf" stroke-width="1.1"/><path d="M1.6 2.4 C2.4 1.2 3.6 1 4.6 1.4" fill="none" stroke="#cfcfcf" stroke-width="0.9" stroke-linejoin="round" stroke-linecap="round" /></g>
<g transform="translate(1603 441)" ><circle cx="0" cy="0" r="6.4" fill="none" stroke="#d4667a" stroke-width="1.1"/><path d="M-4.6 -2.6 C-3 -5.4 0.6 -5.8 1.8 -4.4 C0.6 -3.4 1 -1.6 -0.8 -1.2 C-2.2 -0.8 -2.6 0.8 -4.4 0.2 Z M0.4 1.2 C2.2 0.2 4.6 1 4.4 2.8 C3.6 4.6 1.8 5.2 1 4.4 C0.8 3.2 -0.4 2.6 0.4 1.2 Z" fill="#d4667a" /><path d="M-7.4 6.6 L7.4 -6.6" fill="none" stroke="#d4667a" stroke-width="0.9" stroke-linejoin="round" stroke-linecap="round" stroke-opacity=".7"/></g>
<g transform="translate(1603 477.4)" ><path d="M-6.4 -6 H6.4 V-3.2 H-6.4 Z M-5.4 -3.2 V6 H5.4 V-3.2" fill="none" stroke="#e0e0e0" stroke-width="1.2" stroke-linejoin="round" stroke-linecap="round" /><rect x="-1.8" y="-1" width="3.6" height="1.6" fill="#e0e0e0"/></g>
<g transform="translate(1603 513)" ><rect x="-4" y="-4" width="8" height="8" fill="#e39a5c"/><path d="M-7 -4 V-7 H-4 M4 -7 H7 V-4 M7 4 V7 H4 M-4 7 H-7 V4" fill="none" stroke="#bdbdbd" stroke-width="1" stroke-linejoin="round"  stroke-linecap="butt"/></g>
<g transform="translate(1602.6 541)" ><path d="M-7 5.4 L-0.6 -0.8 C-1.6 -3.6 0.4 -6.8 3.8 -6.8 L2 -4.4 L3.4 -2.4 L6 -2.8 L7.2 -5 C8 -1.6 5.4 1.4 2 0.8 L-4.6 7.6 C-6.2 8.6 -8 7 -7 5.4 Z" fill="#6d8fe0" /></g>
<g transform="translate(1603 569)" ><path d="M-4.4 -3.6 H3.6 M-4.4 -3.6 V5.4 M-3.4 -2.6 L4.4 5" fill="none" stroke="#6d8fe0" stroke-width="1.1" stroke-linejoin="round" stroke-linecap="round" /><circle cx="-4.4" cy="-3.8" r="2.6" fill="#6d8fe0" stroke="none" stroke-width="1"/><circle cx="4.6" cy="-3.6" r="1.5" fill="#6f7fae" stroke="none" stroke-width="1"/><circle cx="-4.4" cy="5.6" r="1.5" fill="#6f7fae" stroke="none" stroke-width="1"/><circle cx="4.6" cy="5.4" r="1.9" fill="#6f7fae" stroke="none" stroke-width="1"/></g>
<g transform="translate(1603 597)" ><circle cx="-0.6" cy="0.6" r="2.6" fill="#6d8fe0" stroke="none" stroke-width="1"/><circle cx="4.6" cy="-4.6" r="1.7" fill="#7a8ac0" stroke="none" stroke-width="1"/><path d="M5.6 3.2 A6.6 6.6 0 1 1 1.2 -5.6" fill="none" stroke="#8f93b8" stroke-width="1" stroke-linejoin="round" stroke-linecap="round" /></g>
<g transform="translate(1602.6 625)" ><circle cx="-1.6" cy="1.4" r="2.7" fill="none" stroke="#6d8fe0" stroke-width="1.5"/><path d="M-6.6 1.6 C-6.8 -1.6 -4 -3.6 -1.4 -3.8 L3.2 -6.6 C5.6 -7.8 7.8 -5 6.4 -3 L3.4 2.6 C2 5.6 -1.6 7.2 -4.6 5.6 C-6 4.8 -6.6 3.2 -6.6 1.6 Z" fill="none" stroke="#6d8fe0" stroke-width="1.1" stroke-linejoin="round" stroke-linecap="round" /><circle cx="4.6" cy="-4.4" r="0.9" fill="#6d8fe0" stroke="none" stroke-width="1"/></g>
<g transform="translate(1603 653)" ><path d="M-5.4 -5 H5.4 L0 5.6 Z" fill="none" stroke="#21d4ae" stroke-width="1.1" stroke-linejoin="round" stroke-linecap="round" /><rect x="-7.1000000000000005" y="-6.7" width="3.4" height="3.4" fill="#444444" stroke="#21d4ae" stroke-width="1.05"/><rect x="3.7" y="-6.7" width="3.4" height="3.4" fill="#444444" stroke="#21d4ae" stroke-width="1.05"/><rect x="-1.7" y="3.8999999999999995" width="3.4" height="3.4" fill="#444444" stroke="#21d4ae" stroke-width="1.05"/></g>
<g transform="translate(1603 681)" ><circle cx="0" cy="0" r="6.6" fill="none" stroke="#d4667a" stroke-width="1"/><path d="M0 0 V-6.6 A6.6 6.6 0 0 0 -6.6 0 Z M0 0 H6.6 A6.6 6.6 0 0 1 0 6.6 Z" fill="#d4667a" /><path d="M-6.4 1.6 C-3 4.6 3 4.6 6.4 1.6 A6.6 6.6 0 0 1 -6.4 1.6 Z" fill="#d4667a" fill-opacity=".55"/></g>
<g transform="translate(1603 717)" ><rect x="-6.8" y="-6.8" width="13.6" height="13.6" fill="#8f4a58"/><rect x="-6.80" y="-6.80" width="2.72" height="2.72" fill="#d4667a"/><rect x="-6.80" y="-1.36" width="2.72" height="2.72" fill="#d4667a"/><rect x="-6.80" y="4.08" width="2.72" height="2.72" fill="#d4667a"/><rect x="-4.08" y="-4.08" width="2.72" height="2.72" fill="#d4667a"/><rect x="-4.08" y="1.36" width="2.72" height="2.72" fill="#d4667a"/><rect x="-1.36" y="-6.80" width="2.72" height="2.72" fill="#d4667a"/><rect x="-1.36" y="-1.36" width="2.72" height="2.72" fill="#d4667a"/><rect x="-1.36" y="4.08" width="2.72" height="2.72" fill="#d4667a"/><rect x="1.36" y="-4.08" width="2.72" height="2.72" fill="#d4667a"/><rect x="1.36" y="1.36" width="2.72" height="2.72" fill="#d4667a"/><rect x="4.08" y="-6.80" width="2.72" height="2.72" fill="#d4667a"/><rect x="4.08" y="-1.36" width="2.72" height="2.72" fill="#d4667a"/><rect x="4.08" y="4.08" width="2.72" height="2.72" fill="#d4667a"/></g>
<g transform="translate(1633.9 288.9)" ><rect x="-4" y="-4" width="8" height="8" fill="#e8e8e8"/><path d="M-7 -4 V-7 H-4 M4 -7 H7 V-4 M7 4 V7 H4 M-4 7 H-7 V4" fill="none" stroke="#c8c8c8" stroke-width="1" stroke-linejoin="round"  stroke-linecap="butt"/></g>
<g transform="translate(1751.5 289.6) scale(1.05)" ><path d="M-1.8 -4 L2.2 0 L-1.8 4" fill="none" stroke="#cfcfcf" stroke-width="1.2" stroke-linecap="round" stroke-linejoin="round"/></g>
<g transform="translate(1771 288.6)" ><path d="M-5.4 -5 H5.4 L0 5.6 Z" fill="none" stroke="#e8e8e8" stroke-width="1.1" stroke-linejoin="round" stroke-linecap="round" /><rect x="-7.1000000000000005" y="-6.7" width="3.4" height="3.4" fill="#444444" stroke="#e8e8e8" stroke-width="1.05"/><rect x="3.7" y="-6.7" width="3.4" height="3.4" fill="#444444" stroke="#e8e8e8" stroke-width="1.05"/><rect x="-1.7" y="3.8999999999999995" width="3.4" height="3.4" fill="#444444" stroke="#e8e8e8" stroke-width="1.05"/></g>
<g transform="translate(1902 289.2)" ><path d="M-6.8 6.6 L-1.9 2" fill="none" stroke="#b4b4b4" stroke-width="1.15" stroke-linejoin="round" stroke-linecap="round" /><path d="M-4.8 -1.6 L-3.3 -2.6 H-0.4 L3 -6.9 L6.8 -3.4 L2.5 0.3 V3.6 L1.6 4.5 Z" fill="none" stroke="#b4b4b4" stroke-width="1.15" stroke-linejoin="round" stroke-linecap="round" /></g>
<g transform="translate(1636 324.6)" ><path d="M-5.4 -5 H5.4 L0 5.6 Z" fill="none" stroke="#e8e8e8" stroke-width="1.1" stroke-linejoin="round" stroke-linecap="round" /><rect x="-7.1000000000000005" y="-6.7" width="3.4" height="3.4" fill="#2e2e2e" stroke="#e8e8e8" stroke-width="1.05"/><rect x="3.7" y="-6.7" width="3.4" height="3.4" fill="#2e2e2e" stroke="#e8e8e8" stroke-width="1.05"/><rect x="-1.7" y="3.8999999999999995" width="3.4" height="3.4" fill="#2e2e2e" stroke="#e8e8e8" stroke-width="1.05"/></g>
<g transform="translate(1649.5 326)" ><path d="M-3.2 -1.6 L0 1.6 L3.2 -1.6" fill="none" stroke="#e0e0e0" stroke-width="1.3" stroke-linecap="round" stroke-linejoin="round"/></g>
<g transform="translate(1901.5 325)" ><path d="M0 -6.8 C2.4 -5.2 4.4 -4.8 6.4 -4.8 C6.6 0.6 4.6 4.8 0 7 C-4.6 4.8 -6.6 0.6 -6.4 -4.8 C-4.4 -4.8 -2.4 -5.2 0 -6.8 Z" fill="none" stroke="#9a9a9a" stroke-width="1.1" stroke-linejoin="round" stroke-linecap="round" /></g>
<g transform="translate(1563 268)" ><circle cx="-2.6" cy="-4.2" r="2.8" fill="none" stroke="#f0f0f0" stroke-width="1.1"/><circle cx="3.4" cy="-4.6" r="2.1" fill="none" stroke="#f0f0f0" stroke-width="1.1"/><path d="M-4.6 -1.4 H2.4 Q3.2 -1.4 3.2 -0.6 M-4.4 0.8 H2 V5.6 H-4.4 Z M3 3 L6.4 1 V5.6 Z M-6.6 3 H-4.4 M-6.6 1.6 V4.4" fill="none" stroke="#f0f0f0" stroke-width="1.1" stroke-linejoin="round" stroke-linecap="round" /><circle cx="-2.6" cy="-4.2" r="0.7" fill="#f0f0f0" stroke="none" stroke-width="1"/><circle cx="3.4" cy="-4.6" r="0.6" fill="#f0f0f0" stroke="none" stroke-width="1"/></g>
<g transform="translate(1563 298)" ><path d="M-7 -6.6 H7 V6.6 H-7 Z M-2.4 -6.6 V6.6 M2.4 -6.6 V6.6 M-7 -2.2 H7 M-7 2.2 H7" fill="none" stroke="#f0f0f0" stroke-width="1.1" stroke-linejoin="round"  stroke-linecap="butt"/></g>
<g transform="translate(16.6 1155.5)" ><path d="M-5.2 -3.4 C-5.2 -6.2 -3.4 -7.4 0 -7.4 C3.4 -7.4 5.2 -6.2 5.2 -3.4 V4 C5.2 6.6 3.4 7.8 0 7.8 C-3.4 7.8 -5.2 6.6 -5.2 4 Z" fill="none" stroke="#b4b4b4" stroke-width="1.15" stroke-linejoin="round" stroke-linecap="round" /><path d="M-4.8 -0.6 V-3.8 C-4.8 -6 -3.4 -7 -0.4 -7 V-0.6 Z" fill="#b4b4b4" /></g>
<g transform="translate(228 1155.5)" ><path d="M-5.2 -3.4 C-5.2 -6.2 -3.4 -7.4 0 -7.4 C3.4 -7.4 5.2 -6.2 5.2 -3.4 V4 C5.2 6.6 3.4 7.8 0 7.8 C-3.4 7.8 -5.2 6.6 -5.2 4 Z" fill="none" stroke="#b4b4b4" stroke-width="1.15" stroke-linejoin="round" stroke-linecap="round" /><rect x="-1.6" y="-5.6" width="3.2" height="5.2" rx="1" fill="#b4b4b4"/></g>
<g transform="translate(439.4 1155.5)" ><path d="M-5.2 -3.4 C-5.2 -6.2 -3.4 -7.4 0 -7.4 C3.4 -7.4 5.2 -6.2 5.2 -3.4 V4 C5.2 6.6 3.4 7.8 0 7.8 C-3.4 7.8 -5.2 6.6 -5.2 4 Z" fill="none" stroke="#b4b4b4" stroke-width="1.15" stroke-linejoin="round" stroke-linecap="round" /><path d="M4.8 -0.6 V-3.8 C4.8 -6 3.4 -7 0.4 -7 V-0.6 Z" fill="#b4b4b4" /></g>
<g transform="translate(1861.4 1155.6)" ><circle cx="0" cy="0" r="6.4" fill="none" stroke="#8c8c8c" stroke-width="1"/><path d="M-6.4 0 H6.4 M0 -6.4 C-4 -3 -4 3 0 6.4 M0 -6.4 C4 -3 4 3 0 6.4 M-5.4 -3.4 H5.4 M-5.4 3.4 H5.4" fill="none" stroke="#8c8c8c" stroke-width="0.8" stroke-linejoin="round" stroke-linecap="round" /><path d="M-7.4 -7.6 L7.4 7.6" fill="none" stroke="#8c8c8c" stroke-width="1.1" stroke-linejoin="round" stroke-linecap="round" /></g>
</svg>
<div class="L"><span id="t1" class="t " style="left:854px;top:3px;color:#f2f2f2;font-size:14.5px;font-weight:700;letter-spacing:-0.041px;">* (Unsaved) - Blender 4.2.9 LTS</span>
<span id="t2" class="t " style="left:35.5px;top:28px;color:#e0e0e0;letter-spacing:-0.137px;">File</span>
<span id="t3" class="t " style="left:69.3px;top:28px;color:#e0e0e0;letter-spacing:-0.121px;">Edit</span>
<span id="t4" class="t " style="left:105.2px;top:28px;color:#e0e0e0;letter-spacing:-0.461px;">Render</span>
<span id="t5" class="t " style="left:157px;top:28px;color:#e0e0e0;letter-spacing:0.135px;">Window</span>
<span id="t6" class="t " style="left:216px;top:28px;color:#e0e0e0;letter-spacing:-0.273px;">Help</span>
<span id="t7" class="t " style="left:274.2px;top:31px;color:#a9a9a9;letter-spacing:-0.089px;">Layout</span>
<span id="t8" class="t " style="left:330.5px;top:31px;color:#a9a9a9;letter-spacing:0.062px;">Modeling</span>
<span id="t9" class="t " style="left:400px;top:31px;color:#a9a9a9;letter-spacing:0.102px;">Sculpting</span>
<span id="t10" class="t " style="left:471.3px;top:31px;color:#ffffff;letter-spacing:-0.050px;">UV Editing</span>
<span id="t11" class="t " style="left:548px;top:31px;color:#a9a9a9;letter-spacing:-0.026px;">Texture Paint</span>
<span id="t12" class="t " style="left:638px;top:31px;color:#a9a9a9;letter-spacing:-0.065px;">Shading</span>
<span id="t13" class="t " style="left:702px;top:31px;color:#a9a9a9;letter-spacing:0.069px;">Animation</span>
<span id="t14" class="t " style="left:777px;top:31px;color:#a9a9a9;letter-spacing:-0.231px;">Rendering</span>
<span id="t15" class="t " style="left:851.3px;top:31px;color:#a9a9a9;letter-spacing:0.153px;">Compositing</span>
<span id="t16" class="t " style="left:940px;top:31px;color:#a9a9a9;letter-spacing:-0.229px;">Geometry Nodes</span>
<span id="t17" class="t " style="left:1048px;top:31px;color:#a9a9a9;letter-spacing:0.146px;">Scripting</span>
<span id="t18" class="t " style="left:1622px;top:28px;color:#ebebeb;letter-spacing:-0.406px;">Scene</span>
<span id="t19" class="t " style="left:1799px;top:28px;color:#ebebeb;letter-spacing:-0.201px;">ViewLayer</span>
<span id="t20" class="t " style="left:29.3px;top:1146px;color:#a9a9a9;letter-spacing:-0.393px;">Select</span>
<span id="t21" class="t " style="left:240px;top:1146px;color:#a9a9a9;letter-spacing:-0.163px;">Rotate View</span>
<span id="t22" class="t " style="left:451px;top:1146px;color:#a9a9a9;letter-spacing:-0.193px;">Call Menu</span>
<span id="t23" class="t " style="left:1882.7px;top:1146px;color:#a9a9a9;letter-spacing:-0.141px;">4.2.9</span>
<span id="t24" class="t " style="left:52px;top:55px;color:#e0e0e0;letter-spacing:-0.051px;">View</span>
<span id="t25" class="t " style="left:92.5px;top:55px;color:#e0e0e0;letter-spacing:0.228px;">Image</span>
<span id="t26" class="t " style="left:361.3px;top:55px;color:#ebebeb;letter-spacing:-0.536px;">New</span>
<span id="t27" class="t " style="left:418px;top:55px;color:#ebebeb;letter-spacing:-0.516px;">Open</span>
<span id="t28" class="t " style="left:875.3px;top:54px;color:#ebebeb;letter-spacing:-0.036px;">Edit Mode</span>
<span id="t29" class="t " style="left:1024px;top:54px;color:#e0e0e0;letter-spacing:-0.023px;">View</span>
<span id="t30" class="t " style="left:1065.3px;top:54px;color:#e0e0e0;letter-spacing:-0.326px;">Select</span>
<span id="t31" class="t " style="left:1112px;top:54px;color:#e0e0e0;letter-spacing:0.047px;">Add</span>
<span id="t32" class="t " style="left:1149px;top:54px;color:#e0e0e0;letter-spacing:-0.211px;">Mesh</span>
<span id="t33" class="t " style="left:1193px;top:54px;color:#e0e0e0;letter-spacing:-0.005px;">Vertex</span>
<span id="t34" class="t " style="left:1242px;top:54px;color:#e0e0e0;letter-spacing:-0.133px;">Edge</span>
<span id="t35" class="t " style="left:1284px;top:54px;color:#e0e0e0;letter-spacing:-0.297px;">Face</span>
<span id="t36" class="t " style="left:1324px;top:54px;color:#e0e0e0;letter-spacing:-0.586px;">UV</span>
<span id="t37" class="t " style="left:1390px;top:54px;color:#ebebeb;letter-spacing:-0.115px;">Global</span>
<span id="t38" class="t " style="left:1434px;top:80px;color:#ebebeb;letter-spacing:-0.016px;">X</span>
<span id="t39" class="t " style="left:1451.5px;top:80px;color:#ebebeb;letter-spacing:-0.516px;">Y</span>
<span id="t40" class="t " style="left:1469.2px;top:80px;color:#ebebeb;letter-spacing:-0.344px;">Z</span>
<span id="t41" class="t " style="left:1520px;top:80px;color:#ebebeb;letter-spacing:0.049px;">Options</span>
<span id="t42" class="t sh" style="left:868px;top:109px;color:#ffffff;letter-spacing:0.067px;">Bottom Orthographic</span>
<span id="t43" class="t sh" style="left:868px;top:127.30000000000001px;color:#ffffff;letter-spacing:-0.048px;">(1) Drosophila_CAAX-mCherry_Probabilities_c0</span>
<span id="t44" class="t sh" style="left:868px;top:145px;color:#ffffff;letter-spacing:-0.075px;">10 Meters</span>
<span id="t45" class="t " style="left:1528.2px;top:143px;color:#101010;font-size:11px;font-weight:700;letter-spacing:1.557px;">-Z</span>
<span id="t46" class="t " style="left:1562.2px;top:143px;color:#101010;font-size:11px;font-weight:700;letter-spacing:0.259px;">X</span>
<span id="t47" class="t " style="left:1531.3px;top:175.5px;color:#ffffff;font-size:11px;font-weight:700;letter-spacing:0.248px;">Y</span>
<span id="t48" class="t " style="left:1709px;top:54px;color:#8c8c8c;letter-spacing:-0.505px;">Search</span>
<span id="t49" class="t " style="left:1632px;top:79px;color:#e0e0e0;letter-spacing:-0.129px;">Scene Collection</span>
<span id="t50" class="t " style="left:1652px;top:98.7px;color:#e0e0e0;letter-spacing:0.081px;">Collection</span>
<span id="t51" class="t " style="left:1672.2px;top:118.6px;color:#e0e0e0;letter-spacing:-0.481px;">Camera</span>
<span id="t52" class="t " style="left:1672.2px;top:138.6px;color:#e0e0e0;letter-spacing:-0.073px;">Drosophila_CAAX-mCherry_Bour</span>
<span id="t53" class="t " style="left:1672.2px;top:158.6px;color:#e0e0e0;letter-spacing:-0.094px;">Drosophila_CAAX-mCherry_Prob</span>
<span id="t54" class="t " style="left:1672.2px;top:178.6px;color:#e0e0e0;letter-spacing:0.134px;">Light</span>
<span id="t55" class="t " style="left:1721.4px;top:248px;color:#8c8c8c;letter-spacing:-0.572px;">Search</span>
<span id="t56" class="t " style="left:1650.2px;top:279px;color:#e0e0e0;letter-spacing:-0.150px;">Drosophila_CA...</span>
<span id="t57" class="t " style="left:1787px;top:279px;color:#e0e0e0;letter-spacing:-0.151px;">Drosophila_CA...</span>
<span id="t58" class="t " style="left:1663.2px;top:315px;color:#ebebeb;letter-spacing:-0.046px;">Drosophila_CAAX-mCherry_Probabilitie...</span>
<span id="t59" class="t " style="left:1646.3px;top:348.0px;color:#e0e0e0;letter-spacing:-0.102px;">Vertex Groups</span>
<span id="t60" class="t " style="left:1646.3px;top:471.0px;color:#e0e0e0;letter-spacing:-0.441px;">Shape Keys</span>
<span id="t61" class="t " style="left:1646.3px;top:619.0px;color:#e0e0e0;letter-spacing:-0.307px;">UV Maps</span>
<span id="t62" class="t " style="left:1646.3px;top:646.0px;color:#e0e0e0;letter-spacing:0.128px;">Color Attributes</span>
<span id="t63" class="t " style="left:1646.3px;top:673.0px;color:#e0e0e0;letter-spacing:0.150px;">Attributes</span>
<span id="t64" class="t " style="left:1646.3px;top:700.0px;color:#e0e0e0;letter-spacing:-0.125px;">Texture Space</span>
<span id="t65" class="t " style="left:1646.3px;top:727.0px;color:#e0e0e0;letter-spacing:-0.583px;">Remesh</span>
<span id="t66" class="t " style="left:1646.3px;top:754.0px;color:#e0e0e0;letter-spacing:-0.283px;">Geometry Data</span>
<span id="t67" class="t " style="left:1646.3px;top:781.0px;color:#e0e0e0;letter-spacing:-0.075px;">Custom Properties</span>
<span id="t68" class="t " style="left:1649.3px;top:585.8px;color:#e0e0e0;letter-spacing:-0.070px;">Add Rest Position</span></div>
<div class="L"><div style="left:1466px;top:198.5px;width:178px;height:61px;background:#2b2b2b;border-radius:4px;box-shadow:0 1px 4px rgba(0,0,0,.45);"></div>
<span id="t69" class="t " style="left:1479.2px;top:204.3px;color:#f2f2f2;letter-spacing:-0.092px;">Click: Use a preset viewpoint</span>
<span id="t70" class="t " style="left:1479.2px;top:221.3px;color:#a9a9a9;letter-spacing:-0.040px;">Shortcut: Ctrl Numpad 1</span>
<span id="t71" class="t " style="left:1479.2px;top:234px;color:#e0e0e0;letter-spacing:-0.190px;">Drag: Rotate the view</span>
<svg width="1920" height="1166" viewBox="0 0 1920 1166"><path d="M1535.2 184.6 V200.6 L1538.9 197.2 L1541.6 203.4 L1544.2 202.2 L1541.5 196.2 L1546.6 196 Z" fill="#ffffff" stroke="#1a1a1a" stroke-width="1" stroke-linejoin="round"/></svg></div>
</body></html>
